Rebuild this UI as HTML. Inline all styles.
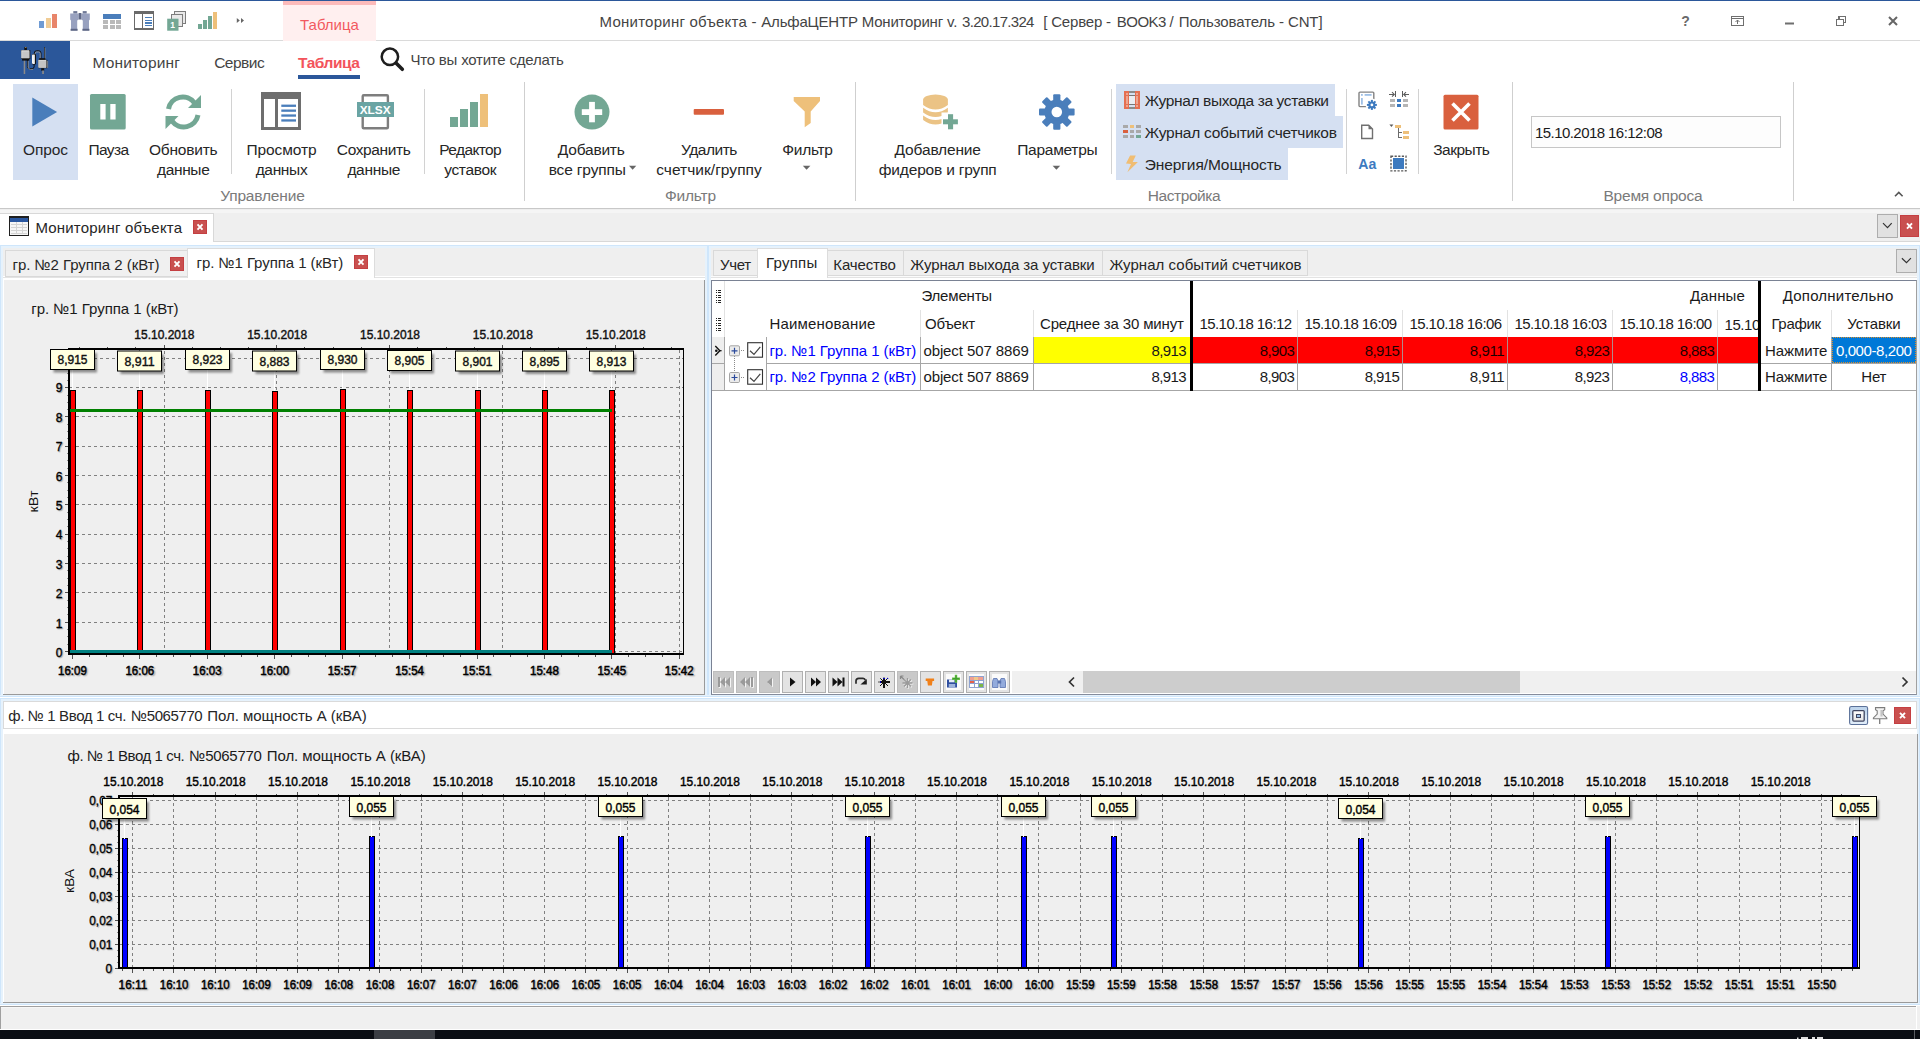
<!DOCTYPE html>
<html lang="ru"><head><meta charset="utf-8"><title>Мониторинг объекта</title>
<style>
html,body{margin:0;padding:0;}
html{overflow:hidden;width:1920px;height:1039px;}
body{width:1920px;height:1039px;overflow:hidden;background:#f0f0f0;position:relative;font-family:"Liberation Sans", sans-serif;}
.a{position:absolute;}
.t{position:absolute;white-space:nowrap;font-family:"Liberation Sans", sans-serif;}
svg{position:absolute;overflow:visible;}
svg text{font-family:"Liberation Sans", sans-serif;}
</style></head>
<body>
<div class="a" style="left:0px;top:0px;width:1920px;height:41px;background:#ffffff;"></div>
<div class="a" style="left:0px;top:0px;width:1920px;height:1px;background:#2b579a;"></div>
<div class="a" style="left:0px;top:40px;width:1920px;height:1px;background:#dadada;"></div>
<div class="a" style="left:283px;top:1px;width:93px;height:40px;background:#ffefef;"></div>
<div class="a" style="left:283px;top:1px;width:93px;height:4px;background:#fcbaba;"></div>
<span class="t" style="left:300.00px;letter-spacing:0.025px;top:17.30px;font-size:15px;line-height:15px;color:#f25a5f;">Таблица</span>
<span class="t" style="left:599.60px;letter-spacing:0.232px;top:13.60px;font-size:15px;line-height:15px;color:#444444;">Мониторинг объекта -</span>
<span class="t" style="left:761.30px;letter-spacing:-0.193px;top:13.60px;font-size:15px;line-height:15px;color:#444444;">АльфаЦЕНТР Мониторинг v.</span>
<span class="t" style="left:962.10px;letter-spacing:-0.691px;top:13.60px;font-size:15px;line-height:15px;color:#444444;">3.20.17.324</span>
<span class="t" style="left:1043.30px;letter-spacing:-0.200px;top:13.60px;font-size:15px;line-height:15px;color:#444444;">[ Сервер -</span>
<span class="t" style="left:1116.70px;letter-spacing:-0.490px;top:13.60px;font-size:15px;line-height:15px;color:#444444;">BOOK3 /</span>
<span class="t" style="left:1178.75px;letter-spacing:-0.101px;top:13.60px;font-size:15px;line-height:15px;color:#444444;">Пользователь - CNT]</span>
<svg style="left:0;top:0" width="400" height="41" viewBox="0 0 400 41">
<g shape-rendering="crispEdges">
<rect x="39" y="21" width="5" height="7" fill="#6f9bd4"/><rect x="45.500" y="17.500" width="5" height="10.500" fill="#f0cc95"/><rect x="52" y="14" width="5" height="14" fill="#e8856a"/>
<rect x="198" y="24" width="3.700" height="4.500" fill="#73a794"/><rect x="203.300" y="20" width="3.700" height="8.500" fill="#73a794"/><rect x="208.300" y="16" width="3.700" height="12.500" fill="#73a794"/><rect x="213.200" y="12" width="3.800" height="16.500" fill="#eec07a"/>
<rect x="103" y="13.500" width="18" height="5" fill="#4a7ebb"/>
<g fill="#b9b9b9"><rect x="103" y="20" width="5" height="3.500"/><rect x="109.500" y="20" width="5" height="3.500"/><rect x="116" y="20" width="5" height="3.500"/><rect x="103" y="25" width="5" height="3.500"/><rect x="109.500" y="25" width="5" height="3.500"/><rect x="116" y="25" width="5" height="3.500"/></g>
<rect x="134.700" y="11.700" width="18.600" height="17.400" fill="#fff" stroke="#6a6a6a" stroke-width="1.400"/><rect x="134" y="11" width="20" height="3.300" fill="#6a6a6a"/><rect x="141.600" y="14" width="1.400" height="15" fill="#6a6a6a"/>
<g fill="#4a7ebb"><rect x="144.500" y="17.200" width="7.500" height="1.200"/><rect x="144.500" y="19.800" width="7.500" height="1.200"/><rect x="144.500" y="22.400" width="7.500" height="1.200"/><rect x="144.500" y="25" width="7.500" height="1.200"/></g>
</g>
<g>
<rect x="73.300" y="11.100" width="4" height="2.500" fill="#6e7896"/><rect x="82.700" y="11.100" width="4" height="2.500" fill="#6e7896"/>
<path d="M70.200 13.500 h8.500 v6 l-1.500 1 v9 h-6.200 v-9 l-.8 -1 z M81.300 13.500 h8.500 v6 l-.8 1 v9 h-6.200 v-9 l-1.500 -1 z" fill="#98a1bf"/>
<rect x="78.700" y="13" width="2.600" height="6.500" fill="#5f6886"/>
<rect x="70.600" y="28.800" width="7" height="2" fill="#5d6685"/><rect x="82.400" y="28.800" width="7" height="2" fill="#5d6685"/>
<rect x="174.500" y="11.500" width="11" height="12" fill="#e9e9e9" stroke="#7d7d7d"/><rect x="171.500" y="14.500" width="11" height="12" fill="#e9e9e9" stroke="#7d7d7d"/><rect x="167.200" y="18.700" width="11.300" height="12" fill="#73a794"/>
<text x="172.500" y="28.300" font-size="8.500" font-weight="bold" fill="#fff" text-anchor="middle">1</text>
<path d="M236.800 18 l3 2.500 l-3 2.500 z M241 18 l3 2.500 l-3 2.500 z" fill="#666"/>
</g></svg>
<svg style="left:1660px;top:0" width="260" height="41" viewBox="1660 0 260 41">
<text x="1685.500" y="26" font-size="14" font-weight="bold" fill="#6a6a6a" text-anchor="middle">?</text>
<g fill="none" stroke="#6f6f6f" stroke-width="1.3" shape-rendering="crispEdges"><rect x="1731.500" y="16.500" width="12" height="9"/><path d="M1731 18.500 h13"/></g>
<path d="M1737.500 24 v-4 M1735.500 22 l2 -2 l2 2" fill="none" stroke="#6f6f6f" stroke-width="1"/>
<rect x="1785" y="22.500" width="9" height="2" fill="#6f6f6f"/>
<g fill="none" stroke="#6f6f6f" stroke-width="1.4" shape-rendering="crispEdges"><rect x="1836.700" y="19.700" width="6.600" height="5.600"/><path d="M1839 19 v-2.300 h6.500 v5.500 h-2"/></g>
<path d="M1889 17 l8 8 M1897 17 l-8 8" stroke="#666" stroke-width="2" fill="none"/>
</svg>
<div class="a" style="left:0px;top:41px;width:1920px;height:167px;background:#ffffff;"></div>
<div class="a" style="left:0px;top:208px;width:1920px;height:1px;background:#c8c8c8;"></div>
<div class="a" style="left:0px;top:41px;width:70px;height:38px;background:#2b579a;"></div>
<svg style="left:0px;top:41px" width="70" height="38" viewBox="0 41 70 38">
<rect x="23.700" y="60" width="1.500" height="14" fill="#8a8a8a"/>
<path d="M27.400 60 v6.500 q0 2.200 2.200 2.200 h2.500 q2 0 2 -2 v-3" fill="none" stroke="#111" stroke-width="1"/>
<path d="M28.200 61 v6 q0 2.400 2.400 2.400 h2.400" fill="none" stroke="#8d8d8d" stroke-width=".9"/>
<path d="M34.300 54.500 v-1.500 q0 -2.200 2.200 -2.200 h2.300 q2.200 0 2.200 2.200 v5.500" fill="none" stroke="#111" stroke-width="1"/>
<path d="M35.200 54.500 v-1 q0 -1.500 1.500 -1.500 h2 q1.500 0 1.500 1.500 v5" fill="none" stroke="#9a9a9a" stroke-width=".9"/>
<rect x="44" y="47" width="1" height="12" fill="#333"/><rect x="44.800" y="48" width=".6" height="11" fill="#888"/>
<rect x="24.300" y="47.200" width="2.600" height="3" fill="#111"/><rect x="25.300" y="47" width="1" height="1" fill="#c9a060"/>
<rect x="21.300" y="50" width="9" height="9" fill="#111"/><rect x="21.300" y="50.300" width="8" height="8" fill="#f2f2f2"/><rect x="22.100" y="51.200" width="7.200" height="7.100" fill="#c6c6c6"/>
<rect x="22.100" y="58.600" width="7.200" height="2" fill="#111"/>
<rect x="32" y="54" width="4" height="10.500" rx="1" fill="#111"/><rect x="32" y="54.600" width="3" height="9.300" rx=".8" fill="#f6f6f6"/><rect x="33.800" y="55" width="1.200" height="8.500" fill="#cfcfcf"/>
<rect x="39.200" y="58.200" width="6.200" height="2" fill="#111"/>
<rect x="38.300" y="59.800" width="9" height="8.400" fill="#111"/><rect x="38.300" y="59.900" width="8" height="7.800" fill="#dedede"/><rect x="39" y="60.600" width="7.200" height="7" fill="#c4c4c4"/>
<rect x="47.300" y="61" width=".8" height="7" fill="#8a8a8a"/>
<rect x="41.200" y="68.200" width="3" height="2.500" fill="#111"/><rect x="42.200" y="70.500" width="1.700" height="3.500" fill="#8a8a8a"/>
</svg>
<span class="t" style="left:92.50px;letter-spacing:0.153px;top:54.88px;font-size:15.5px;line-height:15.5px;color:#444444;">Мониторинг</span>
<span class="t" style="left:214.20px;letter-spacing:-0.513px;top:54.88px;font-size:15.5px;line-height:15.5px;color:#444444;">Сервис</span>
<span class="t" style="left:298.00px;letter-spacing:-0.444px;top:54.88px;font-size:15.5px;line-height:15.5px;color:#f3535b;font-weight:bold;">Таблица</span>
<div class="a" style="left:298px;top:75px;width:62px;height:4px;background:#2b579a;"></div>
<svg style="left:376px;top:44px" width="32" height="32" viewBox="376 44 32 32"><circle cx="389.900" cy="56.800" r="8.200" fill="none" stroke="#1e1e1e" stroke-width="2.500"/><path d="M396 63 l6.300 6.300" stroke="#1e1e1e" stroke-width="3.600" stroke-linecap="round"/></svg>
<span class="t" style="left:410.50px;letter-spacing:-0.214px;top:52.30px;font-size:15px;line-height:15px;color:#444444;">Что вы хотите сделать</span>
<div class="a" style="left:13px;top:84px;width:65px;height:96px;background:#d5e0f2;"></div>
<div class="a" style="left:231px;top:89px;width:1px;height:85px;background:#d2d2d2;"></div>
<div class="a" style="left:424px;top:89px;width:1px;height:85px;background:#d2d2d2;"></div>
<div class="a" style="left:1111px;top:89px;width:1px;height:85px;background:#d2d2d2;"></div>
<div class="a" style="left:1346px;top:89px;width:1px;height:85px;background:#d2d2d2;"></div>
<div class="a" style="left:1418px;top:89px;width:1px;height:85px;background:#d2d2d2;"></div>
<div class="a" style="left:524px;top:82px;width:1px;height:119px;background:#cfcfcf;"></div>
<div class="a" style="left:855px;top:82px;width:1px;height:119px;background:#cfcfcf;"></div>
<div class="a" style="left:1512px;top:82px;width:1px;height:119px;background:#cfcfcf;"></div>
<div class="a" style="left:1793px;top:82px;width:1px;height:119px;background:#cfcfcf;"></div>
<span class="t" style="left:23.00px;letter-spacing:-0.091px;top:142.28px;font-size:15.5px;line-height:15.5px;color:#262626;">Опрос</span>
<span class="t" style="left:88.50px;letter-spacing:-0.616px;top:142.28px;font-size:15.5px;line-height:15.5px;color:#262626;">Пауза</span>
<span class="t" style="left:149.00px;letter-spacing:-0.223px;top:142.28px;font-size:15.5px;line-height:15.5px;color:#262626;">Обновить</span>
<span class="t" style="left:156.95px;letter-spacing:-0.341px;top:161.88px;font-size:15.5px;line-height:15.5px;color:#262626;">данные</span>
<span class="t" style="left:246.60px;letter-spacing:-0.125px;top:142.28px;font-size:15.5px;line-height:15.5px;color:#262626;">Просмотр</span>
<span class="t" style="left:255.65px;letter-spacing:-0.331px;top:161.88px;font-size:15.5px;line-height:15.5px;color:#262626;">данных</span>
<span class="t" style="left:336.85px;letter-spacing:-0.370px;top:142.28px;font-size:15.5px;line-height:15.5px;color:#262626;">Сохранить</span>
<span class="t" style="left:347.40px;letter-spacing:-0.324px;top:161.88px;font-size:15.5px;line-height:15.5px;color:#262626;">данные</span>
<span class="t" style="left:439.35px;letter-spacing:-0.629px;top:142.28px;font-size:15.5px;line-height:15.5px;color:#262626;">Редактор</span>
<span class="t" style="left:444.20px;letter-spacing:-0.335px;top:161.88px;font-size:15.5px;line-height:15.5px;color:#262626;">уставок</span>
<span class="t" style="left:557.80px;letter-spacing:-0.214px;top:142.28px;font-size:15.5px;line-height:15.5px;color:#262626;">Добавить</span>
<span class="t" style="left:548.70px;letter-spacing:-0.142px;top:161.88px;font-size:15.5px;line-height:15.5px;color:#262626;">все группы</span>
<span class="t" style="left:681.00px;letter-spacing:-0.455px;top:142.28px;font-size:15.5px;line-height:15.5px;color:#262626;">Удалить</span>
<span class="t" style="left:656.15px;letter-spacing:0.044px;top:161.88px;font-size:15.5px;line-height:15.5px;color:#262626;">счетчик/группу</span>
<span class="t" style="left:782.30px;letter-spacing:-0.280px;top:142.28px;font-size:15.5px;line-height:15.5px;color:#262626;">Фильтр</span>
<span class="t" style="left:894.60px;letter-spacing:-0.163px;top:142.28px;font-size:15.5px;line-height:15.5px;color:#262626;">Добавление</span>
<span class="t" style="left:878.80px;letter-spacing:-0.178px;top:161.88px;font-size:15.5px;line-height:15.5px;color:#262626;">фидеров и групп</span>
<span class="t" style="left:1017.25px;letter-spacing:-0.281px;top:142.28px;font-size:15.5px;line-height:15.5px;color:#262626;">Параметры</span>
<span class="t" style="left:1433.20px;letter-spacing:-0.500px;top:142.28px;font-size:15.5px;line-height:15.5px;color:#262626;">Закрыть</span>
<span class="t" style="left:220.20px;letter-spacing:-0.177px;top:188.28px;font-size:15.5px;line-height:15.5px;color:#7a7a7a;">Управление</span>
<span class="t" style="left:665.00px;letter-spacing:-0.213px;top:188.28px;font-size:15.5px;line-height:15.5px;color:#7a7a7a;">Фильтр</span>
<span class="t" style="left:1147.70px;letter-spacing:-0.413px;top:188.28px;font-size:15.5px;line-height:15.5px;color:#7a7a7a;">Настройка</span>
<span class="t" style="left:1603.50px;letter-spacing:-0.222px;top:188.28px;font-size:15.5px;line-height:15.5px;color:#7a7a7a;">Время опроса</span>
<svg style="left:0;top:84px" width="1920" height="100" viewBox="0 84 1920 100">
<path d="M32.300 97.400 L57.100 111.900 L32.300 126.400 z" fill="#4a7ebb"/>
<rect x="90" y="94" width="35.700" height="35.500" rx="1.500" fill="#73a794"/><rect x="100.300" y="104" width="5.300" height="15.500" fill="#fff"/><rect x="110.300" y="104" width="5.300" height="15.500" fill="#fff"/>
<g fill="none" stroke="#73a794" stroke-width="5">
<path d="M168.500 109 a14.500 14.500 0 0 1 26 -6"/><path d="M198 115 a14.500 14.500 0 0 1 -26 6"/></g>
<path d="M201 95 v13 h-13 z" fill="#73a794"/><path d="M165.500 129 v-13 h13 z" fill="#73a794"/>
<g shape-rendering="crispEdges">
<rect x="262.500" y="93.500" width="37" height="34.500" fill="#fff" stroke="#6e6e6e" stroke-width="3"/><rect x="261" y="92" width="40" height="7" fill="#6e6e6e"/><rect x="275" y="99" width="3" height="29" fill="#6e6e6e"/>
<g fill="#4a7ebb" shape-rendering="auto"><rect x="281.300" y="104.600" width="14.700" height="2.300"/><rect x="281.300" y="109.500" width="14.700" height="2.300"/><rect x="281.300" y="114.400" width="14.700" height="2.300"/><rect x="281.300" y="119.300" width="14.700" height="2.300"/></g>
<rect x="362.700" y="95.200" width="25.200" height="33" rx="1" fill="#fff" stroke="#7e7e7e" stroke-width="2.400" shape-rendering="auto"/>
<rect x="356.500" y="102" width="37.500" height="14.500" fill="#6aa4a3"/>
<rect x="450" y="117" width="7.500" height="9.500" fill="#73a794"/><rect x="460" y="109" width="7.500" height="17.500" fill="#73a794"/><rect x="470" y="102" width="7.500" height="24.500" fill="#73a794"/><rect x="480" y="94" width="7.500" height="32.500" fill="#eec07a"/>
<rect x="693.700" y="108.900" width="30.300" height="5.800" rx="1" fill="#d9603e" shape-rendering="auto"/>
</g>
<text x="375.200" y="114.300" font-size="11.500" font-weight="bold" fill="#fff" text-anchor="middle" textLength="31" lengthAdjust="spacingAndGlyphs">XLSX</text>
<circle cx="592" cy="112.100" r="17.500" fill="#73a794"/><rect x="589.100" y="101.900" width="5.800" height="20.400" fill="#fff"/><rect x="581.800" y="109.200" width="20.400" height="5.800" fill="#fff"/>
<path d="M793.700 97.100 h26.300 v4 l-9.300 10.500 v11.500 l-6 4.200 v-15.700 l-11 -10.500 z" fill="#eec07a"/>
<g fill="#ebc385"><path d="M923.100 99.600 a12.400 5.200 0 0 1 24.800 0 v5.400 q-12.400 9 -24.800 0 z"/><path d="M923.100 107.800 q12.400 9 24.800 0 v4.800 q-12.400 9 -24.800 0 z"/><path d="M923.100 115.400 q12.400 9 24.800 0 v4.600 q-12.400 9 -24.800 0 z"/></g>
<rect x="941.500" y="112.500" width="17" height="18" fill="#fff"/>
<rect x="948" y="114.200" width="5.100" height="15.100" fill="#73a794"/><rect x="943" y="119.300" width="14.900" height="5" fill="#73a794"/>
<g transform="translate(1056.800 112)" fill="#4a7ebb">
<circle r="12.500"/><rect x="-3.600" y="-17.800" width="7.200" height="9" rx="1" transform="rotate(0)"/><rect x="-3.600" y="-17.800" width="7.200" height="9" rx="1" transform="rotate(45)"/><rect x="-3.600" y="-17.800" width="7.200" height="9" rx="1" transform="rotate(90)"/><rect x="-3.600" y="-17.800" width="7.200" height="9" rx="1" transform="rotate(135)"/><rect x="-3.600" y="-17.800" width="7.200" height="9" rx="1" transform="rotate(180)"/><rect x="-3.600" y="-17.800" width="7.200" height="9" rx="1" transform="rotate(225)"/><rect x="-3.600" y="-17.800" width="7.200" height="9" rx="1" transform="rotate(270)"/><rect x="-3.600" y="-17.800" width="7.200" height="9" rx="1" transform="rotate(315)"/><circle r="5.300" fill="#fff"/></g>
<rect x="1443.500" y="94.700" width="35" height="34.700" rx="1.500" fill="#d9603e"/><path d="M1452.500 103.500 l17 17 M1469.500 103.500 l-17 17" stroke="#fff" stroke-width="3.600"/>
<g fill="#666"><path d="M629 165.800 h7.300 l-3.650 4 z"/><path d="M802.800 165.800 h7.600 l-3.800 4 z"/><path d="M1052.600 165.800 h7.600 l-3.800 4 z"/></g>
</svg>
<div class="a" style="left:1116px;top:84px;width:219px;height:32px;background:#d5e0f2;"></div>
<div class="a" style="left:1116px;top:116px;width:227px;height:32px;background:#d5e0f2;"></div>
<div class="a" style="left:1116px;top:148px;width:172px;height:32px;background:#d5e0f2;"></div>
<span class="t" style="left:1144.80px;letter-spacing:-0.369px;top:93.18px;font-size:15.5px;line-height:15.5px;color:#262626;">Журнал выхода за уставки</span>
<span class="t" style="left:1144.80px;letter-spacing:-0.236px;top:124.88px;font-size:15.5px;line-height:15.5px;color:#262626;">Журнал событий счетчиков</span>
<span class="t" style="left:1144.80px;letter-spacing:-0.108px;top:156.58px;font-size:15.5px;line-height:15.5px;color:#262626;">Энергия/Мощность</span>
<svg style="left:1116px;top:84px" width="310" height="100" viewBox="1116 84 310 100">
<g shape-rendering="crispEdges">
<rect x="1124.300" y="91" width="5" height="18" fill="#e56f52"/><rect x="1134.800" y="91" width="5" height="18" fill="#e56f52"/>
<g fill="#eda592"><rect x="1126" y="93" width="1.700" height="1.700"/><rect x="1126" y="96" width="1.700" height="8"/><rect x="1126" y="105.200" width="1.700" height="1.700"/><rect x="1136.400" y="93" width="1.700" height="1.700"/><rect x="1136.400" y="96" width="1.700" height="8"/><rect x="1136.400" y="105.200" width="1.700" height="1.700"/></g>
<rect x="1129.300" y="91" width="5.500" height="2" fill="#8c8c8c"/><rect x="1129.300" y="107.200" width="5.500" height="1.800" fill="#8c8c8c"/>
<rect x="1129.300" y="94.800" width="5.500" height="1.200" fill="#777"/><rect x="1129.300" y="104.200" width="5.500" height="1.200" fill="#777"/><rect x="1129.300" y="96" width="5.500" height="8.200" fill="#e9ecf3"/>
<g fill="#a9a9a9"><rect x="1123.200" y="124.800" width="4.800" height="3"/><rect x="1136" y="124.800" width="4.800" height="3"/><rect x="1129.500" y="129.800" width="4.800" height="3"/><rect x="1136" y="129.800" width="4.800" height="3"/><rect x="1123.200" y="134.800" width="4.800" height="3.200"/><rect x="1129.500" y="134.800" width="4.800" height="3.200"/></g>
<rect x="1129.500" y="124.800" width="4.800" height="3" fill="#eec07a"/><rect x="1123.200" y="129.800" width="4.800" height="3" fill="#d9603e"/><rect x="1136" y="134.800" width="4.800" height="3.200" fill="#73a794"/>
</g>
<path d="M1130.100 155.400 L1135.800 155.400 L1132.700 161.900 L1137.900 161.900 L1127.400 172.300 L1131 164.100 L1126 163.600 z" fill="#f0bd73"/>
<!-- small icon grid -->
<rect x="1359" y="92.100" width="14.800" height="14.500" rx="1" fill="#fff" stroke="#828282" stroke-width="1.400"/>
<g fill="#9fc0e6"><rect x="1361" y="94" width="1.800" height="1.800"/><rect x="1364.600" y="94" width="7" height="1.800"/><rect x="1361" y="98" width="1.800" height="6.600"/></g>
<circle cx="1371.900" cy="104.900" r="6.300" fill="#fff"/>
<g transform="translate(1371.900 104.900)" fill="#3d7abf"><circle r="3.500"/><rect x="-1" y="-5" width="2" height="3" transform="rotate(0)"/><rect x="-1" y="-5" width="2" height="3" transform="rotate(45)"/><rect x="-1" y="-5" width="2" height="3" transform="rotate(90)"/><rect x="-1" y="-5" width="2" height="3" transform="rotate(135)"/><rect x="-1" y="-5" width="2" height="3" transform="rotate(180)"/><rect x="-1" y="-5" width="2" height="3" transform="rotate(225)"/><rect x="-1" y="-5" width="2" height="3" transform="rotate(270)"/><rect x="-1" y="-5" width="2" height="3" transform="rotate(315)"/><circle r="1.400" fill="#fff"/></g>
<g shape-rendering="crispEdges">
<rect x="1390.300" y="99.100" width="4.900" height="3.300" fill="#b5b5b5"/><rect x="1396.500" y="99.100" width="4.900" height="3.300" fill="#3d7abf"/><rect x="1403" y="99.100" width="4.900" height="3.300" fill="#b5b5b5"/>
<rect x="1390.300" y="104.200" width="4.900" height="3.200" fill="#b5b5b5"/><rect x="1396.500" y="104.200" width="4.900" height="3.200" fill="#3d7abf"/><rect x="1403" y="104.200" width="4.900" height="3.200" fill="#b5b5b5"/>
<rect x="1395.200" y="91.300" width="1.200" height="5.800" fill="#5c5c5c"/><rect x="1401.600" y="91.300" width="1.200" height="5.800" fill="#5c5c5c"/>
<rect x="1389" y="93.800" width="5" height="1.200" fill="#5c5c5c"/><rect x="1404" y="93.800" width="5" height="1.200" fill="#5c5c5c"/>
<rect x="1397.700" y="127.600" width="1.300" height="10.400" fill="#6b6b6b"/><rect x="1397.700" y="132" width="4.500" height="1.300" fill="#6b6b6b"/><rect x="1397.700" y="136.800" width="4.500" height="1.300" fill="#6b6b6b"/>
<rect x="1395.200" y="124.500" width="6.200" height="3.100" fill="#eec07a"/><rect x="1403" y="131" width="6" height="3.300" fill="#eec07a"/><rect x="1403" y="136" width="6" height="3.300" fill="#eec07a"/>
<rect x="1393" y="157.900" width="11" height="11" fill="#3d7abf"/>
</g>
<path d="M1392 92.200 l2.300 2.200 l-2.300 2.200 M1406 92.200 l-2.300 2.200 l2.300 2.200" fill="none" stroke="#5c5c5c" stroke-width="1.100"/>
<path d="M1361.700 125.200 h7 l3.800 3.800 v9.500 h-10.800 z" fill="#fff" stroke="#707070" stroke-width="1.400"/><path d="M1368.500 125 l4.200 4.200 h-4.200 z" fill="#707070"/>
<path d="M1389.400 124.500 h4 l-2 2.400 z" fill="#5a5a5a"/>
<rect x="1391" y="156.200" width="15" height="14.700" fill="none" stroke="#5a5a5a" stroke-width="1.400" stroke-dasharray="2.200 1.400"/>
<text x="1367.300" y="169.300" font-size="14.500" font-weight="bold" fill="#3d7abf" text-anchor="middle" textLength="18" lengthAdjust="spacingAndGlyphs">Aa</text>
</svg>
<div class="a" style="left:1531px;top:116px;width:250px;height:32px;background:#fdfdfd;border:1px solid #c6c6c6;box-sizing:border-box;"></div>
<span class="t" style="left:1535.00px;letter-spacing:-0.560px;top:125.10px;font-size:15px;line-height:15px;color:#1a1a1a;">15.10.2018 16:12:08</span>
<svg style="left:1890px;top:188px" width="18" height="12" viewBox="0 0 18 12"><path d="M5 8.200 l3.800 -3.800 l3.800 3.800" fill="none" stroke="#555" stroke-width="1.600"/></svg>
<div class="a" style="left:0px;top:209px;width:1920px;height:34px;background:#efefef;"></div>
<div class="a" style="left:0px;top:209px;width:1920px;height:1px;background:#eeeeee;"></div>
<div class="a" style="left:0px;top:210px;width:1920px;height:3px;background:#f5f5f5;"></div>
<div class="a" style="left:0px;top:241px;width:1920px;height:1px;background:#d8d8d8;"></div>
<div class="a" style="left:0px;top:213px;width:214px;height:30px;background:#ffffff;border:1px solid #d8d8d8;box-sizing:border-box;border-bottom:none;border-left:none;"></div>
<svg style="left:8px;top:216px" width="22" height="21" viewBox="0 0 22 21" shape-rendering="crispEdges">
<rect x="1.500" y="1" width="19" height="18.300" fill="#f6f6f6" stroke="#1f1f1f" stroke-width="1.400"/><rect x="2" y="1.500" width="18" height="4" fill="#2a57a0"/>
<g fill="#d4d4d4"><rect x="3" y="8" width="16" height="1"/><rect x="3" y="11" width="16" height="1"/><rect x="3" y="14" width="16" height="1"/><rect x="3" y="17" width="16" height="1"/><rect x="8" y="6" width="1" height="12"/><rect x="14" y="6" width="1" height="12"/></g></svg>
<span class="t" style="left:35.40px;letter-spacing:0.200px;top:220.00px;font-size:15px;line-height:15px;color:#262626;">Мониторинг объекта</span>
<svg style="left:193px;top:220px" width="14" height="14" viewBox="0 0 14 14"><rect x=".5" y=".5" width="13" height="13" fill="#c9504f" stroke="#c43f42"/><path d="M4.5 4.4 L9.5 9.6 M9.5 4.4 L4.5 9.6" stroke="#fff" stroke-width="1.900"/></svg>
<div class="a" style="left:1877px;top:214px;width:21px;height:24px;background:#e1e1e1;border:1px solid #adadad;box-sizing:border-box;"></div>
<svg style="left:1877px;top:214px" width="21" height="24" viewBox="1877 214 21 24"><path d="M1883 223.100 L1887.500 227.600 L1891.700 223.100" fill="none" stroke="#333" stroke-width="1.200"/></svg>
<svg style="left:1900px;top:215px" width="19" height="22" viewBox="0 0 19 22"><rect x=".5" y=".5" width="18" height="21" fill="#c9504f" stroke="#c43f42"/><path d="M7.0 8.4 L12.0 13.6 M12.0 8.4 L7.0 13.6" stroke="#fff" stroke-width="1.900"/></svg>
<div class="a" style="left:0px;top:242px;width:1920px;height:458px;background:#ffffff;"></div>
<div class="a" style="left:0px;top:245px;width:1920px;height:1px;background:#cfe6fb;"></div>
<div class="a" style="left:0px;top:246px;width:1920px;height:2px;background:#e6f2fc;"></div>
<div class="a" style="left:0px;top:245px;width:1px;height:452px;background:#cfe6fb;"></div>
<div class="a" style="left:1px;top:246px;width:2px;height:450px;background:#e6f2fc;"></div>
<div class="a" style="left:1917px;top:246px;width:2px;height:450px;background:#e6f2fc;"></div>
<div class="a" style="left:1919px;top:245px;width:1px;height:452px;background:#cfe6fb;"></div>
<div class="a" style="left:705px;top:247px;width:6px;height:449px;background:#e6f2fc;"></div>
<div class="a" style="left:707px;top:246px;width:2px;height:450px;background:#cfe6fb;"></div>
<div class="a" style="left:0px;top:695px;width:1920px;height:1px;background:#e6f2fc;"></div>
<div class="a" style="left:0px;top:696px;width:1920px;height:1px;background:#cfe6fb;"></div>
<div class="a" style="left:3px;top:248px;width:702px;height:28px;background:#efefef;"></div>
<div class="a" style="left:3px;top:277px;width:702px;height:1px;background:#e3e3e3;"></div>
<div class="a" style="left:5px;top:250px;width:183px;height:27px;background:#f0f0f0;border:1px solid #d9d9d9;box-sizing:border-box;"></div>
<div class="a" style="left:187px;top:248px;width:188px;height:30px;background:#ffffff;border:1px solid #dcdcdc;box-sizing:border-box;border-bottom:none;"></div>
<div class="a" style="left:3px;top:278px;width:702px;height:2px;background:#ffffff;"></div>
<div class="a" style="left:188px;top:276px;width:186px;height:2px;background:#ffffff;"></div>
<span class="t" style="left:12.50px;letter-spacing:-0.048px;top:257.30px;font-size:15px;line-height:15px;color:#262626;">гр. №2 Группа 2 (кВт)</span>
<span class="t" style="left:196.50px;letter-spacing:-0.053px;top:255.20px;font-size:15px;line-height:15px;color:#262626;">гр. №1 Группа 1 (кВт)</span>
<svg style="left:170px;top:257px" width="14" height="14" viewBox="0 0 14 14"><rect x=".5" y=".5" width="13" height="13" fill="#c9504f" stroke="#c43f42"/><path d="M4.5 4.4 L9.5 9.6 M9.5 4.4 L4.5 9.6" stroke="#fff" stroke-width="1.900"/></svg>
<svg style="left:354px;top:255px" width="14" height="14" viewBox="0 0 14 14"><rect x=".5" y=".5" width="13" height="13" fill="#c9504f" stroke="#c43f42"/><path d="M4.5 4.4 L9.5 9.6 M9.5 4.4 L4.5 9.6" stroke="#fff" stroke-width="1.900"/></svg>
<div class="a" style="left:4px;top:280px;width:701px;height:415px;background:#efefef;border:1px solid #9a9a9a;box-sizing:border-box;border-left:none;border-top:none;"></div>
<div class="a" style="left:3px;top:694px;width:2px;height:1px;background:#9a9a9a;"></div>
<svg style="left:0;top:0" width="720" height="700" viewBox="0 0 720 700">
<g shape-rendering="crispEdges">
<path d="M70 622.5 H683" stroke="#808080" stroke-width="1" stroke-dasharray="3 3"/>
<path d="M70 592.5 H683" stroke="#808080" stroke-width="1" stroke-dasharray="3 3"/>
<path d="M70 563.5 H683" stroke="#808080" stroke-width="1" stroke-dasharray="3 3"/>
<path d="M70 534.5 H683" stroke="#808080" stroke-width="1" stroke-dasharray="3 3"/>
<path d="M70 504.5 H683" stroke="#808080" stroke-width="1" stroke-dasharray="3 3"/>
<path d="M70 475.5 H683" stroke="#808080" stroke-width="1" stroke-dasharray="3 3"/>
<path d="M70 446.5 H683" stroke="#808080" stroke-width="1" stroke-dasharray="3 3"/>
<path d="M70 416.5 H683" stroke="#808080" stroke-width="1" stroke-dasharray="3 3"/>
<path d="M70 387.5 H683" stroke="#808080" stroke-width="1" stroke-dasharray="3 3"/>
<path d="M70 358.5 H683" stroke="#808080" stroke-width="1" stroke-dasharray="3 3"/>
<path d="M164.5 345 V653" stroke="#808080" stroke-width="1" stroke-dasharray="3 3"/>
<path d="M276.5 345 V653" stroke="#808080" stroke-width="1" stroke-dasharray="3 3"/>
<path d="M389.5 345 V653" stroke="#808080" stroke-width="1" stroke-dasharray="3 3"/>
<path d="M502.5 345 V653" stroke="#808080" stroke-width="1" stroke-dasharray="3 3"/>
<path d="M615.5 345 V653" stroke="#808080" stroke-width="1" stroke-dasharray="3 3"/>
<path d="M72.5 350 V653" stroke="#808080" stroke-width="1" stroke-dasharray="3 3"/>
<path d="M139.5 350 V653" stroke="#808080" stroke-width="1" stroke-dasharray="3 3"/>
<path d="M207.5 350 V653" stroke="#808080" stroke-width="1" stroke-dasharray="3 3"/>
<path d="M274.5 350 V653" stroke="#808080" stroke-width="1" stroke-dasharray="3 3"/>
<path d="M342.5 350 V653" stroke="#808080" stroke-width="1" stroke-dasharray="3 3"/>
<path d="M409.5 350 V653" stroke="#808080" stroke-width="1" stroke-dasharray="3 3"/>
<path d="M477.5 350 V653" stroke="#808080" stroke-width="1" stroke-dasharray="3 3"/>
<path d="M544.5 350 V653" stroke="#808080" stroke-width="1" stroke-dasharray="3 3"/>
<path d="M611.5 350 V653" stroke="#808080" stroke-width="1" stroke-dasharray="3 3"/>
<path d="M679.5 350 V653" stroke="#808080" stroke-width="1" stroke-dasharray="3 3"/>
<path d="M613 651.500 H683" stroke="#808080" stroke-width="1" stroke-dasharray="3 3"/>
<rect x="70" y="348" width="614" height="2" fill="#000"/>
<rect x="68" y="348" width="2" height="307" fill="#000"/>
<rect x="683" y="348" width="1" height="307" fill="#000"/>
<rect x="68" y="653" width="616" height="2" fill="#000"/>
<rect x="79" y="347" width="1" height="1" fill="#505050"/>
<rect x="107" y="347" width="1" height="1" fill="#505050"/>
<rect x="135" y="347" width="1" height="1" fill="#505050"/>
<rect x="164" y="345" width="1" height="3" fill="#505050"/>
<rect x="192" y="347" width="1" height="1" fill="#505050"/>
<rect x="220" y="347" width="1" height="1" fill="#505050"/>
<rect x="248" y="347" width="1" height="1" fill="#505050"/>
<rect x="276" y="345" width="1" height="3" fill="#505050"/>
<rect x="304" y="347" width="1" height="1" fill="#505050"/>
<rect x="333" y="347" width="1" height="1" fill="#505050"/>
<rect x="361" y="347" width="1" height="1" fill="#505050"/>
<rect x="389" y="345" width="1" height="3" fill="#505050"/>
<rect x="417" y="347" width="1" height="1" fill="#505050"/>
<rect x="446" y="347" width="1" height="1" fill="#505050"/>
<rect x="474" y="347" width="1" height="1" fill="#505050"/>
<rect x="502" y="345" width="1" height="3" fill="#505050"/>
<rect x="530" y="347" width="1" height="1" fill="#505050"/>
<rect x="558" y="347" width="1" height="1" fill="#505050"/>
<rect x="586" y="347" width="1" height="1" fill="#505050"/>
<rect x="615" y="345" width="1" height="3" fill="#505050"/>
<rect x="643" y="347" width="1" height="1" fill="#505050"/>
<rect x="671" y="347" width="1" height="1" fill="#505050"/>
<rect x="72" y="655" width="1" height="4" fill="#505050"/>
<rect x="89" y="655" width="1" height="2" fill="#505050"/>
<rect x="106" y="655" width="1" height="2" fill="#505050"/>
<rect x="123" y="655" width="1" height="2" fill="#505050"/>
<rect x="139" y="655" width="1" height="4" fill="#505050"/>
<rect x="156" y="655" width="1" height="2" fill="#505050"/>
<rect x="173" y="655" width="1" height="2" fill="#505050"/>
<rect x="190" y="655" width="1" height="2" fill="#505050"/>
<rect x="207" y="655" width="1" height="4" fill="#505050"/>
<rect x="224" y="655" width="1" height="2" fill="#505050"/>
<rect x="241" y="655" width="1" height="2" fill="#505050"/>
<rect x="257" y="655" width="1" height="2" fill="#505050"/>
<rect x="274" y="655" width="1" height="4" fill="#505050"/>
<rect x="291" y="655" width="1" height="2" fill="#505050"/>
<rect x="308" y="655" width="1" height="2" fill="#505050"/>
<rect x="325" y="655" width="1" height="2" fill="#505050"/>
<rect x="342" y="655" width="1" height="4" fill="#505050"/>
<rect x="359" y="655" width="1" height="2" fill="#505050"/>
<rect x="375" y="655" width="1" height="2" fill="#505050"/>
<rect x="392" y="655" width="1" height="2" fill="#505050"/>
<rect x="409" y="655" width="1" height="4" fill="#505050"/>
<rect x="426" y="655" width="1" height="2" fill="#505050"/>
<rect x="443" y="655" width="1" height="2" fill="#505050"/>
<rect x="460" y="655" width="1" height="2" fill="#505050"/>
<rect x="477" y="655" width="1" height="4" fill="#505050"/>
<rect x="493" y="655" width="1" height="2" fill="#505050"/>
<rect x="510" y="655" width="1" height="2" fill="#505050"/>
<rect x="527" y="655" width="1" height="2" fill="#505050"/>
<rect x="544" y="655" width="1" height="4" fill="#505050"/>
<rect x="561" y="655" width="1" height="2" fill="#505050"/>
<rect x="578" y="655" width="1" height="2" fill="#505050"/>
<rect x="595" y="655" width="1" height="2" fill="#505050"/>
<rect x="611" y="655" width="1" height="4" fill="#505050"/>
<rect x="628" y="655" width="1" height="2" fill="#505050"/>
<rect x="645" y="655" width="1" height="2" fill="#505050"/>
<rect x="662" y="655" width="1" height="2" fill="#505050"/>
<rect x="679" y="655" width="1" height="4" fill="#505050"/>
<rect x="65" y="651" width="3" height="1" fill="#505050"/>
<rect x="67" y="644" width="1" height="1" fill="#8c8c8c"/>
<rect x="67" y="636" width="1" height="1" fill="#8c8c8c"/>
<rect x="67" y="629" width="1" height="1" fill="#8c8c8c"/>
<rect x="65" y="622" width="3" height="1" fill="#505050"/>
<rect x="67" y="614" width="1" height="1" fill="#8c8c8c"/>
<rect x="67" y="607" width="1" height="1" fill="#8c8c8c"/>
<rect x="67" y="600" width="1" height="1" fill="#8c8c8c"/>
<rect x="65" y="592" width="3" height="1" fill="#505050"/>
<rect x="67" y="585" width="1" height="1" fill="#8c8c8c"/>
<rect x="67" y="578" width="1" height="1" fill="#8c8c8c"/>
<rect x="67" y="570" width="1" height="1" fill="#8c8c8c"/>
<rect x="65" y="563" width="3" height="1" fill="#505050"/>
<rect x="67" y="556" width="1" height="1" fill="#8c8c8c"/>
<rect x="67" y="548" width="1" height="1" fill="#8c8c8c"/>
<rect x="67" y="541" width="1" height="1" fill="#8c8c8c"/>
<rect x="65" y="534" width="3" height="1" fill="#505050"/>
<rect x="67" y="526" width="1" height="1" fill="#8c8c8c"/>
<rect x="67" y="519" width="1" height="1" fill="#8c8c8c"/>
<rect x="67" y="512" width="1" height="1" fill="#8c8c8c"/>
<rect x="65" y="504" width="3" height="1" fill="#505050"/>
<rect x="67" y="497" width="1" height="1" fill="#8c8c8c"/>
<rect x="67" y="490" width="1" height="1" fill="#8c8c8c"/>
<rect x="67" y="482" width="1" height="1" fill="#8c8c8c"/>
<rect x="65" y="475" width="3" height="1" fill="#505050"/>
<rect x="67" y="468" width="1" height="1" fill="#8c8c8c"/>
<rect x="67" y="460" width="1" height="1" fill="#8c8c8c"/>
<rect x="67" y="453" width="1" height="1" fill="#8c8c8c"/>
<rect x="65" y="446" width="3" height="1" fill="#505050"/>
<rect x="67" y="438" width="1" height="1" fill="#8c8c8c"/>
<rect x="67" y="431" width="1" height="1" fill="#8c8c8c"/>
<rect x="67" y="424" width="1" height="1" fill="#8c8c8c"/>
<rect x="65" y="416" width="3" height="1" fill="#505050"/>
<rect x="67" y="409" width="1" height="1" fill="#8c8c8c"/>
<rect x="67" y="402" width="1" height="1" fill="#8c8c8c"/>
<rect x="67" y="395" width="1" height="1" fill="#8c8c8c"/>
<rect x="65" y="387" width="3" height="1" fill="#505050"/>
<rect x="67" y="380" width="1" height="1" fill="#8c8c8c"/>
<rect x="67" y="373" width="1" height="1" fill="#8c8c8c"/>
<rect x="67" y="365" width="1" height="1" fill="#8c8c8c"/>
<rect x="65" y="358" width="3" height="1" fill="#505050"/>
<rect x="72" y="370" width="1" height="20" fill="#fff"/>
<rect x="70" y="390" width="6" height="263" fill="#000"/>
<rect x="71" y="391" width="4" height="262" fill="#ff0000"/>
<rect x="139" y="370" width="1" height="20" fill="#fff"/>
<rect x="137" y="390" width="6" height="263" fill="#000"/>
<rect x="138" y="391" width="4" height="262" fill="#ff0000"/>
<rect x="207" y="370" width="1" height="20" fill="#fff"/>
<rect x="205" y="390" width="6" height="263" fill="#000"/>
<rect x="206" y="391" width="4" height="262" fill="#ff0000"/>
<rect x="274" y="370" width="1" height="21" fill="#fff"/>
<rect x="272" y="391" width="6" height="262" fill="#000"/>
<rect x="273" y="392" width="4" height="261" fill="#ff0000"/>
<rect x="342" y="370" width="1" height="19" fill="#fff"/>
<rect x="340" y="389" width="6" height="264" fill="#000"/>
<rect x="341" y="390" width="4" height="263" fill="#ff0000"/>
<rect x="409" y="370" width="1" height="20" fill="#fff"/>
<rect x="407" y="390" width="6" height="263" fill="#000"/>
<rect x="408" y="391" width="4" height="262" fill="#ff0000"/>
<rect x="477" y="370" width="1" height="20" fill="#fff"/>
<rect x="475" y="390" width="6" height="263" fill="#000"/>
<rect x="476" y="391" width="4" height="262" fill="#ff0000"/>
<rect x="544" y="370" width="1" height="20" fill="#fff"/>
<rect x="542" y="390" width="6" height="263" fill="#000"/>
<rect x="543" y="391" width="4" height="262" fill="#ff0000"/>
<rect x="611" y="370" width="1" height="20" fill="#fff"/>
<rect x="609" y="390" width="6" height="263" fill="#000"/>
<rect x="610" y="391" width="4" height="262" fill="#ff0000"/>
<rect x="70" y="409" width="542" height="3" fill="#008000"/>
<rect x="70" y="650" width="542" height="3" fill="#008080"/>
</g>
<rect x="53.5" y="353.0" width="43.500" height="19.500" fill="#000" opacity=".42" filter="url(#bl)"/>
<rect x="50.5" y="349.5" width="44" height="20" fill="#ffffe1" stroke="#000" stroke-width="1"/>
<text x="72.5" y="364.1" font-size="12" fill="#111" stroke="#111" stroke-width=".4" text-anchor="middle" textLength="30" lengthAdjust="spacingAndGlyphs">8,915</text>
<rect x="120.5" y="354.5" width="43.500" height="19.500" fill="#000" opacity=".42" filter="url(#bl)"/>
<rect x="117.5" y="351" width="44" height="20" fill="#ffffe1" stroke="#000" stroke-width="1"/>
<text x="139.5" y="365.6" font-size="12" fill="#111" stroke="#111" stroke-width=".4" text-anchor="middle" textLength="30" lengthAdjust="spacingAndGlyphs">8,911</text>
<rect x="188.5" y="353.0" width="43.500" height="19.500" fill="#000" opacity=".42" filter="url(#bl)"/>
<rect x="185.5" y="349.5" width="44" height="20" fill="#ffffe1" stroke="#000" stroke-width="1"/>
<text x="207.5" y="364.1" font-size="12" fill="#111" stroke="#111" stroke-width=".4" text-anchor="middle" textLength="30" lengthAdjust="spacingAndGlyphs">8,923</text>
<rect x="255.5" y="354.5" width="43.500" height="19.500" fill="#000" opacity=".42" filter="url(#bl)"/>
<rect x="252.5" y="351" width="44" height="20" fill="#ffffe1" stroke="#000" stroke-width="1"/>
<text x="274.5" y="365.6" font-size="12" fill="#111" stroke="#111" stroke-width=".4" text-anchor="middle" textLength="30" lengthAdjust="spacingAndGlyphs">8,883</text>
<rect x="323.5" y="353.0" width="43.500" height="19.500" fill="#000" opacity=".42" filter="url(#bl)"/>
<rect x="320.5" y="349.5" width="44" height="20" fill="#ffffe1" stroke="#000" stroke-width="1"/>
<text x="342.5" y="364.1" font-size="12" fill="#111" stroke="#111" stroke-width=".4" text-anchor="middle" textLength="30" lengthAdjust="spacingAndGlyphs">8,930</text>
<rect x="390.5" y="354.0" width="43.500" height="19.500" fill="#000" opacity=".42" filter="url(#bl)"/>
<rect x="387.5" y="350.5" width="44" height="20" fill="#ffffe1" stroke="#000" stroke-width="1"/>
<text x="409.5" y="365.1" font-size="12" fill="#111" stroke="#111" stroke-width=".4" text-anchor="middle" textLength="30" lengthAdjust="spacingAndGlyphs">8,905</text>
<rect x="458.5" y="354.5" width="43.500" height="19.500" fill="#000" opacity=".42" filter="url(#bl)"/>
<rect x="455.5" y="351" width="44" height="20" fill="#ffffe1" stroke="#000" stroke-width="1"/>
<text x="477.5" y="365.6" font-size="12" fill="#111" stroke="#111" stroke-width=".4" text-anchor="middle" textLength="30" lengthAdjust="spacingAndGlyphs">8,901</text>
<rect x="525.5" y="354.5" width="43.500" height="19.500" fill="#000" opacity=".42" filter="url(#bl)"/>
<rect x="522.5" y="351" width="44" height="20" fill="#ffffe1" stroke="#000" stroke-width="1"/>
<text x="544.5" y="365.6" font-size="12" fill="#111" stroke="#111" stroke-width=".4" text-anchor="middle" textLength="30" lengthAdjust="spacingAndGlyphs">8,895</text>
<rect x="592.5" y="354.5" width="43.500" height="19.500" fill="#000" opacity=".42" filter="url(#bl)"/>
<rect x="589.5" y="351" width="44" height="20" fill="#ffffe1" stroke="#000" stroke-width="1"/>
<text x="611.5" y="365.6" font-size="12" fill="#111" stroke="#111" stroke-width=".4" text-anchor="middle" textLength="30" lengthAdjust="spacingAndGlyphs">8,913</text>
<text x="164.3" y="338.7" font-size="12" fill="#111" stroke="#111" stroke-width=".4" text-anchor="middle" textLength="60" lengthAdjust="spacingAndGlyphs">15.10.2018</text>
<text x="277.15" y="338.7" font-size="12" fill="#111" stroke="#111" stroke-width=".4" text-anchor="middle" textLength="60" lengthAdjust="spacingAndGlyphs">15.10.2018</text>
<text x="390.0" y="338.7" font-size="12" fill="#111" stroke="#111" stroke-width=".4" text-anchor="middle" textLength="60" lengthAdjust="spacingAndGlyphs">15.10.2018</text>
<text x="502.84999999999997" y="338.7" font-size="12" fill="#111" stroke="#111" stroke-width=".4" text-anchor="middle" textLength="60" lengthAdjust="spacingAndGlyphs">15.10.2018</text>
<text x="615.7" y="338.7" font-size="12" fill="#111" stroke="#111" stroke-width=".4" text-anchor="middle" textLength="60" lengthAdjust="spacingAndGlyphs">15.10.2018</text>
<text x="72.4" y="675.2" font-size="12.400" fill="#000" stroke="#000" stroke-width=".5" text-anchor="middle" textLength="28.800" lengthAdjust="spacingAndGlyphs" style="text-shadow:1.5px 1px 1.5px rgba(0,0,0,.22)">16:09</text>
<text x="139.83" y="675.2" font-size="12.400" fill="#000" stroke="#000" stroke-width=".5" text-anchor="middle" textLength="28.800" lengthAdjust="spacingAndGlyphs" style="text-shadow:1.5px 1px 1.5px rgba(0,0,0,.22)">16:06</text>
<text x="207.26000000000002" y="675.2" font-size="12.400" fill="#000" stroke="#000" stroke-width=".5" text-anchor="middle" textLength="28.800" lengthAdjust="spacingAndGlyphs" style="text-shadow:1.5px 1px 1.5px rgba(0,0,0,.22)">16:03</text>
<text x="274.69000000000005" y="675.2" font-size="12.400" fill="#000" stroke="#000" stroke-width=".5" text-anchor="middle" textLength="28.800" lengthAdjust="spacingAndGlyphs" style="text-shadow:1.5px 1px 1.5px rgba(0,0,0,.22)">16:00</text>
<text x="342.12" y="675.2" font-size="12.400" fill="#000" stroke="#000" stroke-width=".5" text-anchor="middle" textLength="28.800" lengthAdjust="spacingAndGlyphs" style="text-shadow:1.5px 1px 1.5px rgba(0,0,0,.22)">15:57</text>
<text x="409.55000000000007" y="675.2" font-size="12.400" fill="#000" stroke="#000" stroke-width=".5" text-anchor="middle" textLength="28.800" lengthAdjust="spacingAndGlyphs" style="text-shadow:1.5px 1px 1.5px rgba(0,0,0,.22)">15:54</text>
<text x="476.98" y="675.2" font-size="12.400" fill="#000" stroke="#000" stroke-width=".5" text-anchor="middle" textLength="28.800" lengthAdjust="spacingAndGlyphs" style="text-shadow:1.5px 1px 1.5px rgba(0,0,0,.22)">15:51</text>
<text x="544.4100000000001" y="675.2" font-size="12.400" fill="#000" stroke="#000" stroke-width=".5" text-anchor="middle" textLength="28.800" lengthAdjust="spacingAndGlyphs" style="text-shadow:1.5px 1px 1.5px rgba(0,0,0,.22)">15:48</text>
<text x="611.84" y="675.2" font-size="12.400" fill="#000" stroke="#000" stroke-width=".5" text-anchor="middle" textLength="28.800" lengthAdjust="spacingAndGlyphs" style="text-shadow:1.5px 1px 1.5px rgba(0,0,0,.22)">15:45</text>
<text x="679.2700000000001" y="675.2" font-size="12.400" fill="#000" stroke="#000" stroke-width=".5" text-anchor="middle" textLength="28.800" lengthAdjust="spacingAndGlyphs" style="text-shadow:1.5px 1px 1.5px rgba(0,0,0,.22)">15:42</text>
<text x="62.5" y="657.0" font-size="12" fill="#000" stroke="#000" stroke-width=".33" text-anchor="end" style="text-shadow:1px 1px 1px rgba(0,0,0,.25)">0</text>
<text x="62.5" y="627.6" font-size="12" fill="#000" stroke="#000" stroke-width=".33" text-anchor="end" style="text-shadow:1px 1px 1px rgba(0,0,0,.25)">1</text>
<text x="62.5" y="598.2" font-size="12" fill="#000" stroke="#000" stroke-width=".33" text-anchor="end" style="text-shadow:1px 1px 1px rgba(0,0,0,.25)">2</text>
<text x="62.5" y="568.8" font-size="12" fill="#000" stroke="#000" stroke-width=".33" text-anchor="end" style="text-shadow:1px 1px 1px rgba(0,0,0,.25)">3</text>
<text x="62.5" y="539.4" font-size="12" fill="#000" stroke="#000" stroke-width=".33" text-anchor="end" style="text-shadow:1px 1px 1px rgba(0,0,0,.25)">4</text>
<text x="62.5" y="510.0" font-size="12" fill="#000" stroke="#000" stroke-width=".33" text-anchor="end" style="text-shadow:1px 1px 1px rgba(0,0,0,.25)">5</text>
<text x="62.5" y="480.6" font-size="12" fill="#000" stroke="#000" stroke-width=".33" text-anchor="end" style="text-shadow:1px 1px 1px rgba(0,0,0,.25)">6</text>
<text x="62.5" y="451.2" font-size="12" fill="#000" stroke="#000" stroke-width=".33" text-anchor="end" style="text-shadow:1px 1px 1px rgba(0,0,0,.25)">7</text>
<text x="62.5" y="421.8" font-size="12" fill="#000" stroke="#000" stroke-width=".33" text-anchor="end" style="text-shadow:1px 1px 1px rgba(0,0,0,.25)">8</text>
<text x="62.5" y="392.4" font-size="12" fill="#000" stroke="#000" stroke-width=".33" text-anchor="end" style="text-shadow:1px 1px 1px rgba(0,0,0,.25)">9</text>
<text transform="translate(37.5 501.5) rotate(-90)" font-size="12" fill="#111" text-anchor="middle" textLength="22" lengthAdjust="spacingAndGlyphs">кВт</text>
<defs><filter id="bl" x="-20%" y="-20%" width="140%" height="140%"><feGaussianBlur stdDeviation="1"/></filter></defs>
</svg>
<span class="t" style="left:31.25px;letter-spacing:-0.031px;top:301.05px;font-size:15px;line-height:15px;color:#1a1a1a;">гр. №1 Группа 1 (кВт)</span>
<div class="a" style="left:711px;top:248px;width:1206px;height:28px;background:#efefef;"></div>
<div class="a" style="left:711px;top:276px;width:1206px;height:1px;background:#fbfbfb;"></div>
<div class="a" style="left:711px;top:277px;width:1206px;height:1px;background:#e3e3e3;"></div>
<div class="a" style="left:711px;top:278px;width:1206px;height:2px;background:#ffffff;"></div>
<div class="a" style="left:713px;top:250px;width:45px;height:26px;background:#efefef;border:1px solid #d9d9d9;box-sizing:border-box;"></div>
<span class="t" style="left:720.00px;letter-spacing:-0.316px;top:256.90px;font-size:15px;line-height:15px;color:#262626;">Учет</span>
<div class="a" style="left:827px;top:250px;width:77px;height:26px;background:#efefef;border:1px solid #d9d9d9;box-sizing:border-box;"></div>
<span class="t" style="left:833.30px;letter-spacing:-0.128px;top:256.90px;font-size:15px;line-height:15px;color:#262626;">Качество</span>
<div class="a" style="left:903px;top:250px;width:200px;height:26px;background:#efefef;border:1px solid #d9d9d9;box-sizing:border-box;"></div>
<span class="t" style="left:910.30px;letter-spacing:-0.089px;top:256.90px;font-size:15px;line-height:15px;color:#262626;">Журнал выхода за уставки</span>
<div class="a" style="left:1102px;top:250px;width:206px;height:26px;background:#efefef;border:1px solid #d9d9d9;box-sizing:border-box;"></div>
<span class="t" style="left:1109.40px;letter-spacing:0.042px;top:256.90px;font-size:15px;line-height:15px;color:#262626;">Журнал событий счетчиков</span>
<div class="a" style="left:757px;top:248px;width:71px;height:30px;background:#ffffff;border:1px solid #dcdcdc;box-sizing:border-box;border-bottom:none;"></div>
<div class="a" style="left:758px;top:276px;width:69px;height:2px;background:#ffffff;"></div>
<span class="t" style="left:766.00px;letter-spacing:0.253px;top:254.80px;font-size:15px;line-height:15px;color:#262626;">Группы</span>
<div class="a" style="left:1896px;top:249px;width:21px;height:24px;background:#e1e1e1;border:1px solid #adadad;box-sizing:border-box;"></div>
<svg style="left:1896px;top:249px" width="21" height="24" viewBox="1896 249 21 24"><path d="M1901.900 258.200 L1906.500 262.700 L1910.900 258.200" fill="none" stroke="#333" stroke-width="1.200"/></svg>
<div class="a" style="left:711px;top:280px;width:1206px;height:415px;background:#ffffff;border:1px solid #7a8294;box-sizing:border-box;border-right:1px solid #a0a0a0;border-bottom:1px solid #858c9c;"></div>
<div class="a" style="left:712px;top:337px;width:12px;height:53px;background:#eeeeee;"></div>
<div class="a" style="left:724px;top:281px;width:1px;height:56px;background:#e2e2e2;"></div>
<div class="a" style="left:724px;top:337px;width:1px;height:54px;background:#a6a6a6;"></div>
<div class="a" style="left:920px;top:310px;width:1px;height:27px;background:#e2e2e2;"></div>
<div class="a" style="left:920px;top:337px;width:1px;height:54px;background:#a6a6a6;"></div>
<div class="a" style="left:1033px;top:310px;width:1px;height:27px;background:#e2e2e2;"></div>
<div class="a" style="left:1033px;top:337px;width:1px;height:54px;background:#a6a6a6;"></div>
<div class="a" style="left:1297px;top:310px;width:1px;height:27px;background:#e2e2e2;"></div>
<div class="a" style="left:1297px;top:337px;width:1px;height:54px;background:#a6a6a6;"></div>
<div class="a" style="left:1402px;top:310px;width:1px;height:27px;background:#e2e2e2;"></div>
<div class="a" style="left:1402px;top:337px;width:1px;height:54px;background:#a6a6a6;"></div>
<div class="a" style="left:1507px;top:310px;width:1px;height:27px;background:#e2e2e2;"></div>
<div class="a" style="left:1507px;top:337px;width:1px;height:54px;background:#a6a6a6;"></div>
<div class="a" style="left:1612px;top:310px;width:1px;height:27px;background:#e2e2e2;"></div>
<div class="a" style="left:1612px;top:337px;width:1px;height:54px;background:#a6a6a6;"></div>
<div class="a" style="left:1717px;top:310px;width:1px;height:27px;background:#e2e2e2;"></div>
<div class="a" style="left:1717px;top:337px;width:1px;height:54px;background:#a6a6a6;"></div>
<div class="a" style="left:1831px;top:310px;width:1px;height:27px;background:#e2e2e2;"></div>
<div class="a" style="left:1831px;top:337px;width:1px;height:54px;background:#a6a6a6;"></div>
<div class="a" style="left:766px;top:337px;width:1px;height:54px;background:#a6a6a6;"></div>
<div class="a" style="left:712px;top:363px;width:1204px;height:1px;background:#a6a6a6;"></div>
<div class="a" style="left:712px;top:390px;width:1204px;height:1px;background:#a6a6a6;"></div>
<div class="a" style="left:725px;top:363px;width:41px;height:1px;background:#ffffff;"></div>
<div class="a" style="left:1034px;top:337px;width:156px;height:26px;background:#ffff00;"></div>
<div class="a" style="left:1193px;top:337px;width:565px;height:26px;background:#ff0000;"></div>
<div class="a" style="left:1297px;top:337px;width:1px;height:26px;background:#b08a8a;"></div>
<div class="a" style="left:1402px;top:337px;width:1px;height:26px;background:#b08a8a;"></div>
<div class="a" style="left:1507px;top:337px;width:1px;height:26px;background:#b08a8a;"></div>
<div class="a" style="left:1612px;top:337px;width:1px;height:26px;background:#b08a8a;"></div>
<div class="a" style="left:1717px;top:337px;width:1px;height:26px;background:#b08a8a;"></div>
<div class="a" style="left:1832px;top:337px;width:84px;height:26px;background:#0078d7;"></div>
<svg style="left:1832px;top:337px" width="84" height="26"><rect x=".5" y=".5" width="83" height="25" fill="none" stroke="#d98e2b" stroke-width="1" stroke-dasharray="1 1" shape-rendering="crispEdges"/></svg>
<div class="a" style="left:1190px;top:281px;width:3px;height:110px;background:#000000;"></div>
<div class="a" style="left:1758px;top:281px;width:3px;height:110px;background:#000000;"></div>
<span class="t" style="left:921.45px;letter-spacing:-0.184px;top:287.80px;font-size:15px;line-height:15px;color:#1a1a1a;">Элементы</span>
<span class="t" style="left:1690.00px;letter-spacing:0.133px;top:287.80px;font-size:15px;line-height:15px;color:#1a1a1a;">Данные</span>
<span class="t" style="left:1782.70px;letter-spacing:0.218px;top:287.80px;font-size:15px;line-height:15px;color:#1a1a1a;">Дополнительно</span>
<span class="t" style="left:769.40px;letter-spacing:0.176px;top:315.90px;font-size:15px;line-height:15px;color:#1a1a1a;">Наименование</span>
<span class="t" style="left:925.00px;letter-spacing:-0.182px;top:315.90px;font-size:15px;line-height:15px;color:#1a1a1a;">Объект</span>
<span class="t" style="left:1040.00px;letter-spacing:-0.156px;top:315.90px;font-size:15px;line-height:15px;color:#1a1a1a;">Среднее за 30 минут</span>
<span class="t" style="left:1199.50px;letter-spacing:-0.578px;top:315.90px;font-size:15px;line-height:15px;color:#1a1a1a;">15.10.18 16:12</span>
<span class="t" style="left:1304.50px;letter-spacing:-0.578px;top:315.90px;font-size:15px;line-height:15px;color:#1a1a1a;">15.10.18 16:09</span>
<span class="t" style="left:1409.50px;letter-spacing:-0.578px;top:315.90px;font-size:15px;line-height:15px;color:#1a1a1a;">15.10.18 16:06</span>
<span class="t" style="left:1514.50px;letter-spacing:-0.578px;top:315.90px;font-size:15px;line-height:15px;color:#1a1a1a;">15.10.18 16:03</span>
<span class="t" style="left:1619.50px;letter-spacing:-0.578px;top:315.90px;font-size:15px;line-height:15px;color:#1a1a1a;">15.10.18 16:00</span>
<div class="a" style="left:1718px;top:311px;width:40px;height:25px;background:#ffffff;"></div>
<div class="a" style="left:1718px;top:311px;width:40px;height:25px;overflow:hidden;"><span class="t" style="left:6.500px;top:6.250px;font-size:15px;line-height:15px;color:#1a1a1a;letter-spacing:-.42px;">15.10.18 15:57</span></div>
<span class="t" style="left:1771.40px;letter-spacing:-0.308px;top:315.90px;font-size:15px;line-height:15px;color:#1a1a1a;">График</span>
<span class="t" style="left:1847.30px;letter-spacing:-0.098px;top:315.90px;font-size:15px;line-height:15px;color:#1a1a1a;">Уставки</span>
<span class="t" style="left:769.40px;letter-spacing:-0.048px;top:342.50px;font-size:15px;line-height:15px;color:#0000ff;">гр. №1 Группа 1 (кВт)</span>
<span class="t" style="left:769.40px;letter-spacing:-0.048px;top:369.20px;font-size:15px;line-height:15px;color:#0000ff;">гр. №2 Группа 2 (кВт)</span>
<span class="t" style="left:923.40px;letter-spacing:-0.098px;top:342.50px;font-size:15px;line-height:15px;color:#1a1a1a;">object 507 8869</span>
<span class="t" style="left:923.40px;letter-spacing:-0.098px;top:369.20px;font-size:15px;line-height:15px;color:#1a1a1a;">object 507 8869</span>
<span class="t" style="left:1151.50px;letter-spacing:-0.609px;top:342.50px;font-size:15px;line-height:15px;color:#1a1a1a;">8,913</span>
<span class="t" style="left:1151.50px;letter-spacing:-0.609px;top:369.20px;font-size:15px;line-height:15px;color:#1a1a1a;">8,913</span>
<span class="t" style="left:1259.70px;letter-spacing:-0.609px;top:342.50px;font-size:15px;line-height:15px;color:#1c0000;">8,903</span>
<span class="t" style="left:1259.70px;letter-spacing:-0.609px;top:369.20px;font-size:15px;line-height:15px;color:#1a1a1a;">8,903</span>
<span class="t" style="left:1364.70px;letter-spacing:-0.609px;top:342.50px;font-size:15px;line-height:15px;color:#1c0000;">8,915</span>
<span class="t" style="left:1364.70px;letter-spacing:-0.609px;top:369.20px;font-size:15px;line-height:15px;color:#1a1a1a;">8,915</span>
<span class="t" style="left:1469.70px;letter-spacing:-0.388px;top:342.50px;font-size:15px;line-height:15px;color:#1c0000;">8,911</span>
<span class="t" style="left:1469.70px;letter-spacing:-0.388px;top:369.20px;font-size:15px;line-height:15px;color:#1a1a1a;">8,911</span>
<span class="t" style="left:1574.70px;letter-spacing:-0.609px;top:342.50px;font-size:15px;line-height:15px;color:#1c0000;">8,923</span>
<span class="t" style="left:1574.70px;letter-spacing:-0.609px;top:369.20px;font-size:15px;line-height:15px;color:#1a1a1a;">8,923</span>
<span class="t" style="left:1679.70px;letter-spacing:-0.609px;top:342.50px;font-size:15px;line-height:15px;color:#1c0000;">8,883</span>
<span class="t" style="left:1679.70px;letter-spacing:-0.609px;top:369.20px;font-size:15px;line-height:15px;color:#0000ff;">8,883</span>
<span class="t" style="left:1765.00px;letter-spacing:-0.093px;top:342.50px;font-size:15px;line-height:15px;color:#1a1a1a;">Нажмите</span>
<span class="t" style="left:1765.00px;letter-spacing:-0.093px;top:369.20px;font-size:15px;line-height:15px;color:#1a1a1a;">Нажмите</span>
<span class="t" style="left:1836.00px;letter-spacing:-0.416px;top:342.50px;font-size:15px;line-height:15px;color:#ffffff;">0,000-8,200</span>
<span class="t" style="left:1861.30px;letter-spacing:-0.182px;top:369.20px;font-size:15px;line-height:15px;color:#1a1a1a;">Нет</span>
<svg style="left:712px;top:281px" width="60" height="112" viewBox="712 281 60 112">
<g fill="#222" shape-rendering="crispEdges"><rect x="716" y="290" width="1" height="1"/><rect x="718" y="290" width="3" height="1"/><rect x="716" y="292" width="1" height="1"/><rect x="718" y="292" width="3" height="1"/><rect x="716" y="295" width="1" height="1"/><rect x="718" y="295" width="3" height="1"/><rect x="716" y="297" width="1" height="1"/><rect x="718" y="297" width="3" height="1"/><rect x="716" y="300" width="1" height="1"/><rect x="718" y="300" width="3" height="1"/><rect x="716" y="302" width="1" height="1"/><rect x="718" y="302" width="3" height="1"/><rect x="716" y="318" width="1" height="1"/><rect x="718" y="318" width="3" height="1"/><rect x="716" y="320" width="1" height="1"/><rect x="718" y="320" width="3" height="1"/><rect x="716" y="323" width="1" height="1"/><rect x="718" y="323" width="3" height="1"/><rect x="716" y="325" width="1" height="1"/><rect x="718" y="325" width="3" height="1"/><rect x="716" y="328" width="1" height="1"/><rect x="718" y="328" width="3" height="1"/><rect x="716" y="330" width="1" height="1"/><rect x="718" y="330" width="3" height="1"/></g>
<path d="M715.300 346 l4.500 4.700 l-4.500 4.700" fill="none" stroke="#111" stroke-width="1.400"/><circle cx="716.300" cy="350.700" r="1.300" fill="#111"/><path d="M719 350.700 h2.600" stroke="#111" stroke-width="1.200"/>
<g shape-rendering="crispEdges">
<path d="M734.500 356 V372" stroke="#8a8a8a" stroke-dasharray="1 1"/><path d="M741 350.500 H745 M741 377.500 H744" stroke="#8a8a8a" stroke-dasharray="1 1"/>
</g>
<rect x="729.500" y="345.800" width="10" height="10" rx="1.200" fill="#ebebeb" stroke="#a4a4a4"/><path d="M731.500 350.800 h6 M734.500 347.800 v6" stroke="#2b4a9c" stroke-width="1.200"/>
<rect x="729.500" y="372.500" width="10" height="10" rx="1.200" fill="#ebebeb" stroke="#a4a4a4"/><path d="M731.500 377.500 h6 M734.500 374.500 v6" stroke="#2b4a9c" stroke-width="1.200"/>
<rect x="747.700" y="342.700" width="14.800" height="14.500" fill="#fff" stroke="#333" stroke-width="1.100"/>
<rect x="747.700" y="369.700" width="14.800" height="14.500" fill="#fff" stroke="#333" stroke-width="1.100"/>
<path d="M750 350.700 l4 3.700 l6.300 -7.600" fill="none" stroke="#444" stroke-width="1.200"/>
<path d="M750 377.700 l4 3.700 l6.300 -7.600" fill="none" stroke="#444" stroke-width="1.200"/>
</svg>
<div class="a" style="left:713px;top:671px;width:21px;height:22px;background:#c9c9c9;border:1px solid #bdbdbd;box-sizing:border-box;"></div>
<div class="a" style="left:736px;top:671px;width:21px;height:22px;background:#c9c9c9;border:1px solid #bdbdbd;box-sizing:border-box;"></div>
<div class="a" style="left:759px;top:671px;width:21px;height:22px;background:#c9c9c9;border:1px solid #bdbdbd;box-sizing:border-box;"></div>
<div class="a" style="left:782px;top:671px;width:21px;height:22px;background:#e3e3e3;border:1px solid #b0b0b0;box-sizing:border-box;"></div>
<div class="a" style="left:805px;top:671px;width:21px;height:22px;background:#e3e3e3;border:1px solid #b0b0b0;box-sizing:border-box;"></div>
<div class="a" style="left:828px;top:671px;width:21px;height:22px;background:#e3e3e3;border:1px solid #b0b0b0;box-sizing:border-box;"></div>
<div class="a" style="left:851px;top:671px;width:21px;height:22px;background:#e3e3e3;border:1px solid #b0b0b0;box-sizing:border-box;"></div>
<div class="a" style="left:874px;top:671px;width:21px;height:22px;background:#e3e3e3;border:1px solid #b0b0b0;box-sizing:border-box;"></div>
<div class="a" style="left:897px;top:671px;width:21px;height:22px;background:#c9c9c9;border:1px solid #bdbdbd;box-sizing:border-box;"></div>
<div class="a" style="left:920px;top:671px;width:21px;height:22px;background:#e3e3e3;border:1px solid #b0b0b0;box-sizing:border-box;"></div>
<div class="a" style="left:943px;top:671px;width:21px;height:22px;background:#e3e3e3;border:1px solid #b0b0b0;box-sizing:border-box;"></div>
<div class="a" style="left:966px;top:671px;width:21px;height:22px;background:#e3e3e3;border:1px solid #b0b0b0;box-sizing:border-box;"></div>
<div class="a" style="left:989px;top:671px;width:21px;height:22px;background:#e3e3e3;border:1px solid #b0b0b0;box-sizing:border-box;"></div>
<div class="a" style="left:946px;top:674px;width:15px;height:16px;background:#fbfbfb;"></div>
<div class="a" style="left:969px;top:674px;width:15px;height:16px;background:#fbfbfb;"></div>
<div class="a" style="left:992px;top:674px;width:15px;height:16px;background:#fbfbfb;"></div>
<div class="a" style="left:1012px;top:671px;width:52px;height:22px;background:#f0f0f0;"></div>
<div class="a" style="left:1063px;top:671px;width:853px;height:22px;background:#f0f0f0;"></div>
<div class="a" style="left:1083px;top:671px;width:437px;height:22px;background:#cdcdcd;"></div>
<svg style="left:712px;top:671px" width="1206" height="22" viewBox="712 671 1206 22">
<g fill="#fff" transform="translate(.8 .8)"><path d="M718 677 h2 v10 h-2 z M725 677 v10 l-5 -5 z M730 677 v10 l-5 -5 z"/><path d="M751 677 h2 v10 h-2z M745 677 v10 l-5 -5 z M750 677 v10 l-5 -5 z" /><path d="M772 677.500 v9 l-5 -4.500 z"/></g>
<g fill="#9a9a9a"><path d="M718 677 h2 v10 h-2 z M725 677 v10 l-5 -5 z M730 677 v10 l-5 -5 z"/><path d="M751 677 h2 v10 h-2z M745 677 v10 l-5 -5 z M750 677 v10 l-5 -5 z" /><path d="M772 677.500 v9 l-5 -4.500 z"/></g>
<g fill="#111"><path d="M790 677.500 v9 l5.500 -4.500 z"/><path d="M811 677.500 v9 l5 -4.500 z M816 677.500 v9 l5 -4.500 z"/><path d="M832.500 677.500 v9 l5 -4.500 z M837.500 677.500 v9 l5 -4.500 z M842.500 677.500 h2 v9 h-2 z"/>
<path d="M856 683.700 V681 Q856 678.600 858.800 678.400 H863 Q864.800 678.600 865.300 680.200" fill="none" stroke="#2a2a2a" stroke-width="1.700"/><path d="M860.400 684.500 H866.800 V678.900 Z" fill="#1e1e1e"/>
<g shape-rendering="crispEdges"><rect x="883" y="678" width="2" height="10"/><rect x="880" y="681" width="10" height="2"/><rect x="883" y="678" width="2" height="1" fill="#0000c0"/><rect x="880" y="681" width="1" height="2" fill="#0000c0"/><rect x="883" y="676.500" width="2" height="1.300" fill="#9a9a9a"/><rect x="878.400" y="681" width="1.500" height="2" fill="#9a9a9a"/></g>
<path d="M880.300 678.300 l7.700 7.700 M887.700 678.300 l-7.700 7.700" stroke="#111" stroke-width="1" fill="none"/><circle cx="887.600" cy="678.400" r=".7" fill="#0000c0"/></g>
<path d="M908.300 678.800 v10 M903.300 683.800 h10 M904.800 680.300 l7 7 M911.800 680.300 l-7 7" stroke="#f2f2f2" stroke-width="1.300" fill="none"/>
<path d="M907.500 678 v10 M902.500 683 h10 M904 679.500 l7 7 M911 679.500 l-7 7" stroke="#9a9a9a" stroke-width="1.300" fill="none"/><path d="M900.500 676 l3.500 3.500 M900.500 676 h3 M900.500 676 v3" stroke="#8a8a8a" stroke-width="1.200" fill="none"/>
<path d="M925.700 678.400 h8.400 v2.700 h-8.400 z M927.300 681.100 h5.200 l-.6 4.400 h-4 z" fill="#f08019"/>
<rect x="947" y="679.500" width="10" height="8" fill="#2f4f9f"/><rect x="949" y="679.500" width="5.500" height="2.800" fill="#e6ecf7"/><rect x="948.800" y="684" width="6.400" height="3.500" fill="#9fb3dc"/><path d="M956 674.700 v8 M952 678.700 h8" stroke="#6cc04a" stroke-width="2.400"/><path d="M956 675.500 v6.400 M952.800 678.700 h6.400" stroke="#3f9e2f" stroke-width="1.200"/>
<g shape-rendering="crispEdges"><rect x="969.500" y="676.500" width="14" height="11" fill="#fff" stroke="#8ea2d0"/><rect x="970" y="677" width="13" height="3" fill="#f0a090"/><rect x="970" y="680" width="4" height="4" fill="#e8604a"/><rect x="974" y="677" width="4" height="3" fill="#f0c88a"/><rect x="978" y="683" width="5" height="4" fill="#7ab648"/><rect x="974" y="680" width="1" height="7" fill="#8ea2d0"/><rect x="978" y="680" width="1" height="7" fill="#8ea2d0"/><rect x="970" y="683" width="13" height="1" fill="#8ea2d0"/><rect x="970" y="680" width="13" height="1" fill="#8ea2d0"/></g>
<path d="M993.500 678.500 h3.500 l1 2.500 v6.500 h-5.500 v-6 z M1001 678.500 h3.500 l1 3 v6 h-5.500 v-6.500 z" fill="#93abdc" stroke="#5a74b0" stroke-width=".8"/><rect x="997.800" y="680.500" width="3.400" height="3" fill="#5a74b0"/>
<path d="M1074 677.500 l-4.500 4.500 l4.500 4.500" fill="none" stroke="#333" stroke-width="1.700"/>
<path d="M1902.500 677.500 l4.500 4.500 l-4.500 4.500" fill="none" stroke="#333" stroke-width="1.700"/>
</svg>
<div class="a" style="left:0px;top:698px;width:1920px;height:308px;background:#ffffff;"></div>
<div class="a" style="left:0px;top:698px;width:1920px;height:1px;background:#cfe6fb;"></div>
<div class="a" style="left:0px;top:699px;width:1920px;height:2px;background:#e6f2fc;"></div>
<div class="a" style="left:0px;top:698px;width:1px;height:307px;background:#cfe6fb;"></div>
<div class="a" style="left:1px;top:699px;width:2px;height:305px;background:#e6f2fc;"></div>
<div class="a" style="left:1917px;top:699px;width:2px;height:305px;background:#e6f2fc;"></div>
<div class="a" style="left:1919px;top:698px;width:1px;height:307px;background:#cfe6fb;"></div>
<div class="a" style="left:0px;top:1003px;width:1920px;height:1px;background:#e6f2fc;"></div>
<div class="a" style="left:0px;top:1004px;width:1920px;height:1px;background:#cfe6fb;"></div>
<div class="a" style="left:3px;top:701px;width:1914px;height:28px;background:#ffffff;border:1px solid #dadada;box-sizing:border-box;"></div>
<span class="t" style="left:8.20px;letter-spacing:-0.366px;top:708.20px;font-size:15px;line-height:15px;color:#262626;">ф. № 1 Ввод 1 сч.</span>
<span class="t" style="left:131.00px;letter-spacing:-0.400px;top:708.20px;font-size:15px;line-height:15px;color:#262626;">№5065770</span>
<span class="t" style="left:207.30px;letter-spacing:-0.033px;top:708.20px;font-size:15px;line-height:15px;color:#262626;">Пол. мощность А (кВА)</span>
<svg style="left:1846px;top:703px" width="74" height="26" viewBox="1846 703 74 26">
<defs><linearGradient id="mx" x1="0" y1="0" x2="0" y2="1"><stop offset="0" stop-color="#bdd4ec"/><stop offset=".5" stop-color="#c9dcf0"/><stop offset=".5" stop-color="#d6e5f5"/><stop offset="1" stop-color="#e1edf9"/></linearGradient>
<linearGradient id="mi" x1="0" y1="0" x2="0" y2="1"><stop offset="0" stop-color="#fff"/><stop offset="1" stop-color="#e4e4e4"/></linearGradient></defs>
<rect x="1849.600" y="706.500" width="18" height="18" rx="1.800" fill="url(#mx)" stroke="#5b7199" stroke-width="1.100"/>
<rect x="1852.800" y="710.600" width="11.400" height="10.500" rx="1" fill="url(#mi)" stroke="#3f4560" stroke-width="1.300"/>
<rect x="1856.500" y="714.500" width="4" height="3" fill="#9cc0e6" stroke="#3f4560" stroke-width="1"/>
<path d="M1875.500 707.600 h9.200 v2 l-1.700 1.200 v3.300 l3.800 3.800 v.9 h-13.400 v-.9 l3.800 -3.800 v-3.300 l-1.700 -1.200 z" fill="#f4f4f4" stroke="#7c7c7c" stroke-width="1.100"/>
<path d="M1881.500 710 v6.500" stroke="#c4c4c4" stroke-width="2.200"/>
<path d="M1879.700 719 v5" stroke="#7c7c7c" stroke-width="1.300"/>
</svg>
<svg style="left:1894px;top:707px" width="17" height="17" viewBox="0 0 17 17"><rect x=".5" y=".5" width="16" height="16" fill="#c9504f" stroke="#c43f42"/><path d="M6.0 5.9 L11.0 11.1 M11.0 5.9 L6.0 11.1" stroke="#fff" stroke-width="1.900"/></svg>
<div class="a" style="left:4px;top:734px;width:1914px;height:269px;background:#efefef;border:1px solid #9a9a9a;box-sizing:border-box;border-left:none;border-top:none;"></div>
<div class="a" style="left:3px;top:1002px;width:2px;height:1px;background:#9a9a9a;"></div>
<span class="t" style="left:67.60px;letter-spacing:-0.430px;top:747.70px;font-size:15px;line-height:15px;color:#1a1a1a;">ф. № 1 Ввод 1 сч.</span>
<span class="t" style="left:189.30px;letter-spacing:-0.263px;top:747.70px;font-size:15px;line-height:15px;color:#1a1a1a;">№5065770</span>
<span class="t" style="left:266.70px;letter-spacing:-0.052px;top:747.70px;font-size:15px;line-height:15px;color:#1a1a1a;">Пол. мощность А (кВА)</span>
<svg style="left:0;top:730px" width="1920" height="280" viewBox="0 730 1920 280">
<defs><filter id="bl2" x="-20%" y="-30%" width="140%" height="160%"><feGaussianBlur stdDeviation="1"/></filter></defs>
<g shape-rendering="crispEdges">
<path d="M120 944.5 H1859" stroke="#808080" stroke-dasharray="3 3"/>
<path d="M120 920.5 H1859" stroke="#808080" stroke-dasharray="3 3"/>
<path d="M120 896.5 H1859" stroke="#808080" stroke-dasharray="3 3"/>
<path d="M120 872.5 H1859" stroke="#808080" stroke-dasharray="3 3"/>
<path d="M120 848.5 H1859" stroke="#808080" stroke-dasharray="3 3"/>
<path d="M120 824.5 H1859" stroke="#808080" stroke-dasharray="3 3"/>
<path d="M120 800.5 H1859" stroke="#808080" stroke-dasharray="3 3"/>
<path d="M132.5 797 V967" stroke="#808080" stroke-dasharray="3 3"/>
<path d="M173.5 797 V967" stroke="#808080" stroke-dasharray="3 3"/>
<path d="M215.5 797 V967" stroke="#808080" stroke-dasharray="3 3"/>
<path d="M256.5 797 V967" stroke="#808080" stroke-dasharray="3 3"/>
<path d="M297.5 797 V967" stroke="#808080" stroke-dasharray="3 3"/>
<path d="M338.5 797 V967" stroke="#808080" stroke-dasharray="3 3"/>
<path d="M379.5 797 V967" stroke="#808080" stroke-dasharray="3 3"/>
<path d="M421.5 797 V967" stroke="#808080" stroke-dasharray="3 3"/>
<path d="M462.5 797 V967" stroke="#808080" stroke-dasharray="3 3"/>
<path d="M503.5 797 V967" stroke="#808080" stroke-dasharray="3 3"/>
<path d="M544.5 797 V967" stroke="#808080" stroke-dasharray="3 3"/>
<path d="M585.5 797 V967" stroke="#808080" stroke-dasharray="3 3"/>
<path d="M627.5 797 V967" stroke="#808080" stroke-dasharray="3 3"/>
<path d="M668.5 797 V967" stroke="#808080" stroke-dasharray="3 3"/>
<path d="M709.5 797 V967" stroke="#808080" stroke-dasharray="3 3"/>
<path d="M750.5 797 V967" stroke="#808080" stroke-dasharray="3 3"/>
<path d="M791.5 797 V967" stroke="#808080" stroke-dasharray="3 3"/>
<path d="M832.5 797 V967" stroke="#808080" stroke-dasharray="3 3"/>
<path d="M874.5 797 V967" stroke="#808080" stroke-dasharray="3 3"/>
<path d="M915.5 797 V967" stroke="#808080" stroke-dasharray="3 3"/>
<path d="M956.5 797 V967" stroke="#808080" stroke-dasharray="3 3"/>
<path d="M997.5 797 V967" stroke="#808080" stroke-dasharray="3 3"/>
<path d="M1038.5 797 V967" stroke="#808080" stroke-dasharray="3 3"/>
<path d="M1080.5 797 V967" stroke="#808080" stroke-dasharray="3 3"/>
<path d="M1121.5 797 V967" stroke="#808080" stroke-dasharray="3 3"/>
<path d="M1162.5 797 V967" stroke="#808080" stroke-dasharray="3 3"/>
<path d="M1203.5 797 V967" stroke="#808080" stroke-dasharray="3 3"/>
<path d="M1244.5 797 V967" stroke="#808080" stroke-dasharray="3 3"/>
<path d="M1285.5 797 V967" stroke="#808080" stroke-dasharray="3 3"/>
<path d="M1327.5 797 V967" stroke="#808080" stroke-dasharray="3 3"/>
<path d="M1368.5 797 V967" stroke="#808080" stroke-dasharray="3 3"/>
<path d="M1409.5 797 V967" stroke="#808080" stroke-dasharray="3 3"/>
<path d="M1450.5 797 V967" stroke="#808080" stroke-dasharray="3 3"/>
<path d="M1491.5 797 V967" stroke="#808080" stroke-dasharray="3 3"/>
<path d="M1533.5 797 V967" stroke="#808080" stroke-dasharray="3 3"/>
<path d="M1574.5 797 V967" stroke="#808080" stroke-dasharray="3 3"/>
<path d="M1615.5 797 V967" stroke="#808080" stroke-dasharray="3 3"/>
<path d="M1656.5 797 V967" stroke="#808080" stroke-dasharray="3 3"/>
<path d="M1697.5 797 V967" stroke="#808080" stroke-dasharray="3 3"/>
<path d="M1739.5 797 V967" stroke="#808080" stroke-dasharray="3 3"/>
<path d="M1780.5 797 V967" stroke="#808080" stroke-dasharray="3 3"/>
<path d="M1821.5 797 V967" stroke="#808080" stroke-dasharray="3 3"/>
<rect x="118" y="795" width="1742" height="2" fill="#000"/>
<rect x="118" y="795" width="2" height="174" fill="#000"/>
<rect x="1858.5" y="795" width="1.300" height="174" fill="#000"/>
<rect x="118" y="967" width="1742" height="2" fill="#000"/>
<rect x="132" y="792" width="1" height="3" fill="#505050"/>
<rect x="153" y="794" width="1" height="1" fill="#505050"/>
<rect x="173" y="794" width="1" height="1" fill="#505050"/>
<rect x="194" y="794" width="1" height="1" fill="#505050"/>
<rect x="215" y="792" width="1" height="3" fill="#505050"/>
<rect x="235" y="794" width="1" height="1" fill="#505050"/>
<rect x="256" y="794" width="1" height="1" fill="#505050"/>
<rect x="276" y="794" width="1" height="1" fill="#505050"/>
<rect x="297" y="792" width="1" height="3" fill="#505050"/>
<rect x="318" y="794" width="1" height="1" fill="#505050"/>
<rect x="338" y="794" width="1" height="1" fill="#505050"/>
<rect x="359" y="794" width="1" height="1" fill="#505050"/>
<rect x="379" y="792" width="1" height="3" fill="#505050"/>
<rect x="400" y="794" width="1" height="1" fill="#505050"/>
<rect x="421" y="794" width="1" height="1" fill="#505050"/>
<rect x="441" y="794" width="1" height="1" fill="#505050"/>
<rect x="462" y="792" width="1" height="3" fill="#505050"/>
<rect x="482" y="794" width="1" height="1" fill="#505050"/>
<rect x="503" y="794" width="1" height="1" fill="#505050"/>
<rect x="524" y="794" width="1" height="1" fill="#505050"/>
<rect x="544" y="792" width="1" height="3" fill="#505050"/>
<rect x="565" y="794" width="1" height="1" fill="#505050"/>
<rect x="585" y="794" width="1" height="1" fill="#505050"/>
<rect x="606" y="794" width="1" height="1" fill="#505050"/>
<rect x="627" y="792" width="1" height="3" fill="#505050"/>
<rect x="647" y="794" width="1" height="1" fill="#505050"/>
<rect x="668" y="794" width="1" height="1" fill="#505050"/>
<rect x="688" y="794" width="1" height="1" fill="#505050"/>
<rect x="709" y="792" width="1" height="3" fill="#505050"/>
<rect x="729" y="794" width="1" height="1" fill="#505050"/>
<rect x="750" y="794" width="1" height="1" fill="#505050"/>
<rect x="771" y="794" width="1" height="1" fill="#505050"/>
<rect x="791" y="792" width="1" height="3" fill="#505050"/>
<rect x="812" y="794" width="1" height="1" fill="#505050"/>
<rect x="832" y="794" width="1" height="1" fill="#505050"/>
<rect x="853" y="794" width="1" height="1" fill="#505050"/>
<rect x="874" y="792" width="1" height="3" fill="#505050"/>
<rect x="894" y="794" width="1" height="1" fill="#505050"/>
<rect x="915" y="794" width="1" height="1" fill="#505050"/>
<rect x="935" y="794" width="1" height="1" fill="#505050"/>
<rect x="956" y="792" width="1" height="3" fill="#505050"/>
<rect x="977" y="794" width="1" height="1" fill="#505050"/>
<rect x="997" y="794" width="1" height="1" fill="#505050"/>
<rect x="1018" y="794" width="1" height="1" fill="#505050"/>
<rect x="1038" y="792" width="1" height="3" fill="#505050"/>
<rect x="1059" y="794" width="1" height="1" fill="#505050"/>
<rect x="1080" y="794" width="1" height="1" fill="#505050"/>
<rect x="1100" y="794" width="1" height="1" fill="#505050"/>
<rect x="1121" y="792" width="1" height="3" fill="#505050"/>
<rect x="1141" y="794" width="1" height="1" fill="#505050"/>
<rect x="1162" y="794" width="1" height="1" fill="#505050"/>
<rect x="1183" y="794" width="1" height="1" fill="#505050"/>
<rect x="1203" y="792" width="1" height="3" fill="#505050"/>
<rect x="1224" y="794" width="1" height="1" fill="#505050"/>
<rect x="1244" y="794" width="1" height="1" fill="#505050"/>
<rect x="1265" y="794" width="1" height="1" fill="#505050"/>
<rect x="1285" y="792" width="1" height="3" fill="#505050"/>
<rect x="1306" y="794" width="1" height="1" fill="#505050"/>
<rect x="1327" y="794" width="1" height="1" fill="#505050"/>
<rect x="1347" y="794" width="1" height="1" fill="#505050"/>
<rect x="1368" y="792" width="1" height="3" fill="#505050"/>
<rect x="1388" y="794" width="1" height="1" fill="#505050"/>
<rect x="1409" y="794" width="1" height="1" fill="#505050"/>
<rect x="1430" y="794" width="1" height="1" fill="#505050"/>
<rect x="1450" y="792" width="1" height="3" fill="#505050"/>
<rect x="1471" y="794" width="1" height="1" fill="#505050"/>
<rect x="1491" y="794" width="1" height="1" fill="#505050"/>
<rect x="1512" y="794" width="1" height="1" fill="#505050"/>
<rect x="1533" y="792" width="1" height="3" fill="#505050"/>
<rect x="1553" y="794" width="1" height="1" fill="#505050"/>
<rect x="1574" y="794" width="1" height="1" fill="#505050"/>
<rect x="1594" y="794" width="1" height="1" fill="#505050"/>
<rect x="1615" y="792" width="1" height="3" fill="#505050"/>
<rect x="1636" y="794" width="1" height="1" fill="#505050"/>
<rect x="1656" y="794" width="1" height="1" fill="#505050"/>
<rect x="1677" y="794" width="1" height="1" fill="#505050"/>
<rect x="1697" y="792" width="1" height="3" fill="#505050"/>
<rect x="1718" y="794" width="1" height="1" fill="#505050"/>
<rect x="1739" y="794" width="1" height="1" fill="#505050"/>
<rect x="1759" y="794" width="1" height="1" fill="#505050"/>
<rect x="1780" y="792" width="1" height="3" fill="#505050"/>
<rect x="1800" y="794" width="1" height="1" fill="#505050"/>
<rect x="1821" y="794" width="1" height="1" fill="#505050"/>
<rect x="1841" y="794" width="1" height="1" fill="#505050"/>
<rect x="122" y="969" width="1" height="2" fill="#505050"/>
<rect x="132" y="969" width="1" height="4" fill="#505050"/>
<rect x="143" y="969" width="1" height="2" fill="#505050"/>
<rect x="153" y="969" width="1" height="2" fill="#505050"/>
<rect x="163" y="969" width="1" height="2" fill="#505050"/>
<rect x="173" y="969" width="1" height="4" fill="#505050"/>
<rect x="184" y="969" width="1" height="2" fill="#505050"/>
<rect x="194" y="969" width="1" height="2" fill="#505050"/>
<rect x="204" y="969" width="1" height="2" fill="#505050"/>
<rect x="215" y="969" width="1" height="4" fill="#505050"/>
<rect x="225" y="969" width="1" height="2" fill="#505050"/>
<rect x="235" y="969" width="1" height="2" fill="#505050"/>
<rect x="246" y="969" width="1" height="2" fill="#505050"/>
<rect x="256" y="969" width="1" height="4" fill="#505050"/>
<rect x="266" y="969" width="1" height="2" fill="#505050"/>
<rect x="276" y="969" width="1" height="2" fill="#505050"/>
<rect x="287" y="969" width="1" height="2" fill="#505050"/>
<rect x="297" y="969" width="1" height="4" fill="#505050"/>
<rect x="307" y="969" width="1" height="2" fill="#505050"/>
<rect x="318" y="969" width="1" height="2" fill="#505050"/>
<rect x="328" y="969" width="1" height="2" fill="#505050"/>
<rect x="338" y="969" width="1" height="4" fill="#505050"/>
<rect x="349" y="969" width="1" height="2" fill="#505050"/>
<rect x="359" y="969" width="1" height="2" fill="#505050"/>
<rect x="369" y="969" width="1" height="2" fill="#505050"/>
<rect x="379" y="969" width="1" height="4" fill="#505050"/>
<rect x="390" y="969" width="1" height="2" fill="#505050"/>
<rect x="400" y="969" width="1" height="2" fill="#505050"/>
<rect x="410" y="969" width="1" height="2" fill="#505050"/>
<rect x="421" y="969" width="1" height="4" fill="#505050"/>
<rect x="431" y="969" width="1" height="2" fill="#505050"/>
<rect x="441" y="969" width="1" height="2" fill="#505050"/>
<rect x="451" y="969" width="1" height="2" fill="#505050"/>
<rect x="462" y="969" width="1" height="4" fill="#505050"/>
<rect x="472" y="969" width="1" height="2" fill="#505050"/>
<rect x="482" y="969" width="1" height="2" fill="#505050"/>
<rect x="493" y="969" width="1" height="2" fill="#505050"/>
<rect x="503" y="969" width="1" height="4" fill="#505050"/>
<rect x="513" y="969" width="1" height="2" fill="#505050"/>
<rect x="524" y="969" width="1" height="2" fill="#505050"/>
<rect x="534" y="969" width="1" height="2" fill="#505050"/>
<rect x="544" y="969" width="1" height="4" fill="#505050"/>
<rect x="554" y="969" width="1" height="2" fill="#505050"/>
<rect x="565" y="969" width="1" height="2" fill="#505050"/>
<rect x="575" y="969" width="1" height="2" fill="#505050"/>
<rect x="585" y="969" width="1" height="4" fill="#505050"/>
<rect x="596" y="969" width="1" height="2" fill="#505050"/>
<rect x="606" y="969" width="1" height="2" fill="#505050"/>
<rect x="616" y="969" width="1" height="2" fill="#505050"/>
<rect x="627" y="969" width="1" height="4" fill="#505050"/>
<rect x="637" y="969" width="1" height="2" fill="#505050"/>
<rect x="647" y="969" width="1" height="2" fill="#505050"/>
<rect x="657" y="969" width="1" height="2" fill="#505050"/>
<rect x="668" y="969" width="1" height="4" fill="#505050"/>
<rect x="678" y="969" width="1" height="2" fill="#505050"/>
<rect x="688" y="969" width="1" height="2" fill="#505050"/>
<rect x="699" y="969" width="1" height="2" fill="#505050"/>
<rect x="709" y="969" width="1" height="4" fill="#505050"/>
<rect x="719" y="969" width="1" height="2" fill="#505050"/>
<rect x="729" y="969" width="1" height="2" fill="#505050"/>
<rect x="740" y="969" width="1" height="2" fill="#505050"/>
<rect x="750" y="969" width="1" height="4" fill="#505050"/>
<rect x="760" y="969" width="1" height="2" fill="#505050"/>
<rect x="771" y="969" width="1" height="2" fill="#505050"/>
<rect x="781" y="969" width="1" height="2" fill="#505050"/>
<rect x="791" y="969" width="1" height="4" fill="#505050"/>
<rect x="802" y="969" width="1" height="2" fill="#505050"/>
<rect x="812" y="969" width="1" height="2" fill="#505050"/>
<rect x="822" y="969" width="1" height="2" fill="#505050"/>
<rect x="832" y="969" width="1" height="4" fill="#505050"/>
<rect x="843" y="969" width="1" height="2" fill="#505050"/>
<rect x="853" y="969" width="1" height="2" fill="#505050"/>
<rect x="863" y="969" width="1" height="2" fill="#505050"/>
<rect x="874" y="969" width="1" height="4" fill="#505050"/>
<rect x="884" y="969" width="1" height="2" fill="#505050"/>
<rect x="894" y="969" width="1" height="2" fill="#505050"/>
<rect x="905" y="969" width="1" height="2" fill="#505050"/>
<rect x="915" y="969" width="1" height="4" fill="#505050"/>
<rect x="925" y="969" width="1" height="2" fill="#505050"/>
<rect x="935" y="969" width="1" height="2" fill="#505050"/>
<rect x="946" y="969" width="1" height="2" fill="#505050"/>
<rect x="956" y="969" width="1" height="4" fill="#505050"/>
<rect x="966" y="969" width="1" height="2" fill="#505050"/>
<rect x="977" y="969" width="1" height="2" fill="#505050"/>
<rect x="987" y="969" width="1" height="2" fill="#505050"/>
<rect x="997" y="969" width="1" height="4" fill="#505050"/>
<rect x="1007" y="969" width="1" height="2" fill="#505050"/>
<rect x="1018" y="969" width="1" height="2" fill="#505050"/>
<rect x="1028" y="969" width="1" height="2" fill="#505050"/>
<rect x="1038" y="969" width="1" height="4" fill="#505050"/>
<rect x="1049" y="969" width="1" height="2" fill="#505050"/>
<rect x="1059" y="969" width="1" height="2" fill="#505050"/>
<rect x="1069" y="969" width="1" height="2" fill="#505050"/>
<rect x="1080" y="969" width="1" height="4" fill="#505050"/>
<rect x="1090" y="969" width="1" height="2" fill="#505050"/>
<rect x="1100" y="969" width="1" height="2" fill="#505050"/>
<rect x="1110" y="969" width="1" height="2" fill="#505050"/>
<rect x="1121" y="969" width="1" height="4" fill="#505050"/>
<rect x="1131" y="969" width="1" height="2" fill="#505050"/>
<rect x="1141" y="969" width="1" height="2" fill="#505050"/>
<rect x="1152" y="969" width="1" height="2" fill="#505050"/>
<rect x="1162" y="969" width="1" height="4" fill="#505050"/>
<rect x="1172" y="969" width="1" height="2" fill="#505050"/>
<rect x="1183" y="969" width="1" height="2" fill="#505050"/>
<rect x="1193" y="969" width="1" height="2" fill="#505050"/>
<rect x="1203" y="969" width="1" height="4" fill="#505050"/>
<rect x="1213" y="969" width="1" height="2" fill="#505050"/>
<rect x="1224" y="969" width="1" height="2" fill="#505050"/>
<rect x="1234" y="969" width="1" height="2" fill="#505050"/>
<rect x="1244" y="969" width="1" height="4" fill="#505050"/>
<rect x="1255" y="969" width="1" height="2" fill="#505050"/>
<rect x="1265" y="969" width="1" height="2" fill="#505050"/>
<rect x="1275" y="969" width="1" height="2" fill="#505050"/>
<rect x="1285" y="969" width="1" height="4" fill="#505050"/>
<rect x="1296" y="969" width="1" height="2" fill="#505050"/>
<rect x="1306" y="969" width="1" height="2" fill="#505050"/>
<rect x="1316" y="969" width="1" height="2" fill="#505050"/>
<rect x="1327" y="969" width="1" height="4" fill="#505050"/>
<rect x="1337" y="969" width="1" height="2" fill="#505050"/>
<rect x="1347" y="969" width="1" height="2" fill="#505050"/>
<rect x="1358" y="969" width="1" height="2" fill="#505050"/>
<rect x="1368" y="969" width="1" height="4" fill="#505050"/>
<rect x="1378" y="969" width="1" height="2" fill="#505050"/>
<rect x="1388" y="969" width="1" height="2" fill="#505050"/>
<rect x="1399" y="969" width="1" height="2" fill="#505050"/>
<rect x="1409" y="969" width="1" height="4" fill="#505050"/>
<rect x="1419" y="969" width="1" height="2" fill="#505050"/>
<rect x="1430" y="969" width="1" height="2" fill="#505050"/>
<rect x="1440" y="969" width="1" height="2" fill="#505050"/>
<rect x="1450" y="969" width="1" height="4" fill="#505050"/>
<rect x="1461" y="969" width="1" height="2" fill="#505050"/>
<rect x="1471" y="969" width="1" height="2" fill="#505050"/>
<rect x="1481" y="969" width="1" height="2" fill="#505050"/>
<rect x="1491" y="969" width="1" height="4" fill="#505050"/>
<rect x="1502" y="969" width="1" height="2" fill="#505050"/>
<rect x="1512" y="969" width="1" height="2" fill="#505050"/>
<rect x="1522" y="969" width="1" height="2" fill="#505050"/>
<rect x="1533" y="969" width="1" height="4" fill="#505050"/>
<rect x="1543" y="969" width="1" height="2" fill="#505050"/>
<rect x="1553" y="969" width="1" height="2" fill="#505050"/>
<rect x="1563" y="969" width="1" height="2" fill="#505050"/>
<rect x="1574" y="969" width="1" height="4" fill="#505050"/>
<rect x="1584" y="969" width="1" height="2" fill="#505050"/>
<rect x="1594" y="969" width="1" height="2" fill="#505050"/>
<rect x="1605" y="969" width="1" height="2" fill="#505050"/>
<rect x="1615" y="969" width="1" height="4" fill="#505050"/>
<rect x="1625" y="969" width="1" height="2" fill="#505050"/>
<rect x="1636" y="969" width="1" height="2" fill="#505050"/>
<rect x="1646" y="969" width="1" height="2" fill="#505050"/>
<rect x="1656" y="969" width="1" height="4" fill="#505050"/>
<rect x="1666" y="969" width="1" height="2" fill="#505050"/>
<rect x="1677" y="969" width="1" height="2" fill="#505050"/>
<rect x="1687" y="969" width="1" height="2" fill="#505050"/>
<rect x="1697" y="969" width="1" height="4" fill="#505050"/>
<rect x="1708" y="969" width="1" height="2" fill="#505050"/>
<rect x="1718" y="969" width="1" height="2" fill="#505050"/>
<rect x="1728" y="969" width="1" height="2" fill="#505050"/>
<rect x="1739" y="969" width="1" height="4" fill="#505050"/>
<rect x="1749" y="969" width="1" height="2" fill="#505050"/>
<rect x="1759" y="969" width="1" height="2" fill="#505050"/>
<rect x="1769" y="969" width="1" height="2" fill="#505050"/>
<rect x="1780" y="969" width="1" height="4" fill="#505050"/>
<rect x="1790" y="969" width="1" height="2" fill="#505050"/>
<rect x="1800" y="969" width="1" height="2" fill="#505050"/>
<rect x="1811" y="969" width="1" height="2" fill="#505050"/>
<rect x="1821" y="969" width="1" height="4" fill="#505050"/>
<rect x="1831" y="969" width="1" height="2" fill="#505050"/>
<rect x="1841" y="969" width="1" height="2" fill="#505050"/>
<rect x="1852" y="969" width="1" height="2" fill="#505050"/>
<rect x="115" y="968" width="3" height="1" fill="#505050"/>
<rect x="117" y="962" width="1" height="1" fill="#8c8c8c"/>
<rect x="117" y="956" width="1" height="1" fill="#8c8c8c"/>
<rect x="117" y="950" width="1" height="1" fill="#8c8c8c"/>
<rect x="115" y="944" width="3" height="1" fill="#505050"/>
<rect x="117" y="938" width="1" height="1" fill="#8c8c8c"/>
<rect x="117" y="932" width="1" height="1" fill="#8c8c8c"/>
<rect x="117" y="926" width="1" height="1" fill="#8c8c8c"/>
<rect x="115" y="920" width="3" height="1" fill="#505050"/>
<rect x="117" y="914" width="1" height="1" fill="#8c8c8c"/>
<rect x="117" y="908" width="1" height="1" fill="#8c8c8c"/>
<rect x="117" y="902" width="1" height="1" fill="#8c8c8c"/>
<rect x="115" y="896" width="3" height="1" fill="#505050"/>
<rect x="117" y="890" width="1" height="1" fill="#8c8c8c"/>
<rect x="117" y="884" width="1" height="1" fill="#8c8c8c"/>
<rect x="117" y="878" width="1" height="1" fill="#8c8c8c"/>
<rect x="115" y="872" width="3" height="1" fill="#505050"/>
<rect x="117" y="866" width="1" height="1" fill="#8c8c8c"/>
<rect x="117" y="860" width="1" height="1" fill="#8c8c8c"/>
<rect x="117" y="854" width="1" height="1" fill="#8c8c8c"/>
<rect x="115" y="848" width="3" height="1" fill="#505050"/>
<rect x="117" y="842" width="1" height="1" fill="#8c8c8c"/>
<rect x="117" y="836" width="1" height="1" fill="#8c8c8c"/>
<rect x="117" y="830" width="1" height="1" fill="#8c8c8c"/>
<rect x="115" y="824" width="3" height="1" fill="#505050"/>
<rect x="117" y="818" width="1" height="1" fill="#8c8c8c"/>
<rect x="117" y="812" width="1" height="1" fill="#8c8c8c"/>
<rect x="117" y="806" width="1" height="1" fill="#8c8c8c"/>
<rect x="115" y="800" width="3" height="1" fill="#505050"/>
<rect x="122" y="838" width="6" height="129" fill="#000"/>
<rect x="123" y="839" width="4" height="128" fill="#0000ff"/>
<rect x="124" y="818" width="1" height="21" fill="#fff"/>
<rect x="369" y="836" width="6" height="131" fill="#000"/>
<rect x="370" y="837" width="4" height="130" fill="#0000ff"/>
<rect x="371" y="816" width="1" height="21" fill="#fff"/>
<rect x="618" y="836" width="6" height="131" fill="#000"/>
<rect x="619" y="837" width="4" height="130" fill="#0000ff"/>
<rect x="620" y="816" width="1" height="21" fill="#fff"/>
<rect x="865" y="836" width="6" height="131" fill="#000"/>
<rect x="866" y="837" width="4" height="130" fill="#0000ff"/>
<rect x="867" y="816" width="1" height="21" fill="#fff"/>
<rect x="1021" y="836" width="6" height="131" fill="#000"/>
<rect x="1022" y="837" width="4" height="130" fill="#0000ff"/>
<rect x="1023" y="816" width="1" height="21" fill="#fff"/>
<rect x="1111" y="836" width="6" height="131" fill="#000"/>
<rect x="1112" y="837" width="4" height="130" fill="#0000ff"/>
<rect x="1113" y="816" width="1" height="21" fill="#fff"/>
<rect x="1358" y="838" width="6" height="129" fill="#000"/>
<rect x="1359" y="839" width="4" height="128" fill="#0000ff"/>
<rect x="1360" y="818" width="1" height="21" fill="#fff"/>
<rect x="1605" y="836" width="6" height="131" fill="#000"/>
<rect x="1606" y="837" width="4" height="130" fill="#0000ff"/>
<rect x="1607" y="816" width="1" height="21" fill="#fff"/>
<rect x="1852" y="836" width="6" height="131" fill="#000"/>
<rect x="1853" y="837" width="4" height="130" fill="#0000ff"/>
<rect x="1854" y="816" width="1" height="21" fill="#fff"/>
</g>
<text x="112.300" y="973.2" font-size="12" fill="#000" stroke="#000" stroke-width=".33" text-anchor="end" style="text-shadow:1px 1px 1px rgba(0,0,0,.22)">0</text>
<text x="112.300" y="949.2" font-size="12" fill="#000" stroke="#000" stroke-width=".33" text-anchor="end" style="text-shadow:1px 1px 1px rgba(0,0,0,.22)" textLength="23" lengthAdjust="spacingAndGlyphs">0,01</text>
<text x="112.300" y="925.2" font-size="12" fill="#000" stroke="#000" stroke-width=".33" text-anchor="end" style="text-shadow:1px 1px 1px rgba(0,0,0,.22)" textLength="23" lengthAdjust="spacingAndGlyphs">0,02</text>
<text x="112.300" y="901.2" font-size="12" fill="#000" stroke="#000" stroke-width=".33" text-anchor="end" style="text-shadow:1px 1px 1px rgba(0,0,0,.22)" textLength="23" lengthAdjust="spacingAndGlyphs">0,03</text>
<text x="112.300" y="877.2" font-size="12" fill="#000" stroke="#000" stroke-width=".33" text-anchor="end" style="text-shadow:1px 1px 1px rgba(0,0,0,.22)" textLength="23" lengthAdjust="spacingAndGlyphs">0,04</text>
<text x="112.300" y="853.2" font-size="12" fill="#000" stroke="#000" stroke-width=".33" text-anchor="end" style="text-shadow:1px 1px 1px rgba(0,0,0,.22)" textLength="23" lengthAdjust="spacingAndGlyphs">0,05</text>
<text x="112.300" y="829.2" font-size="12" fill="#000" stroke="#000" stroke-width=".33" text-anchor="end" style="text-shadow:1px 1px 1px rgba(0,0,0,.22)" textLength="23" lengthAdjust="spacingAndGlyphs">0,06</text>
<text x="112.300" y="805.2" font-size="12" fill="#000" stroke="#000" stroke-width=".33" text-anchor="end" style="text-shadow:1px 1px 1px rgba(0,0,0,.22)" textLength="23" lengthAdjust="spacingAndGlyphs">0,07</text>
<rect x="105.5" y="802.0" width="43.500" height="19.500" fill="#000" opacity=".42" filter="url(#bl2)"/>
<rect x="102.5" y="798.5" width="44" height="20" fill="#ffffe1" stroke="#000" stroke-width="1"/>
<text x="124.5" y="813.8" font-size="12" fill="#000" stroke="#000" stroke-width=".4" text-anchor="middle" textLength="30" lengthAdjust="spacingAndGlyphs">0,054</text>
<rect x="352.5" y="800.0" width="43.500" height="19.500" fill="#000" opacity=".42" filter="url(#bl2)"/>
<rect x="349.5" y="796.5" width="44" height="20" fill="#ffffe1" stroke="#000" stroke-width="1"/>
<text x="371.5" y="811.8" font-size="12" fill="#000" stroke="#000" stroke-width=".4" text-anchor="middle" textLength="30" lengthAdjust="spacingAndGlyphs">0,055</text>
<rect x="601.5" y="800.0" width="43.500" height="19.500" fill="#000" opacity=".42" filter="url(#bl2)"/>
<rect x="598.5" y="796.5" width="44" height="20" fill="#ffffe1" stroke="#000" stroke-width="1"/>
<text x="620.5" y="811.8" font-size="12" fill="#000" stroke="#000" stroke-width=".4" text-anchor="middle" textLength="30" lengthAdjust="spacingAndGlyphs">0,055</text>
<rect x="848.5" y="800.0" width="43.500" height="19.500" fill="#000" opacity=".42" filter="url(#bl2)"/>
<rect x="845.5" y="796.5" width="44" height="20" fill="#ffffe1" stroke="#000" stroke-width="1"/>
<text x="867.5" y="811.8" font-size="12" fill="#000" stroke="#000" stroke-width=".4" text-anchor="middle" textLength="30" lengthAdjust="spacingAndGlyphs">0,055</text>
<rect x="1004.5" y="800.0" width="43.500" height="19.500" fill="#000" opacity=".42" filter="url(#bl2)"/>
<rect x="1001.5" y="796.5" width="44" height="20" fill="#ffffe1" stroke="#000" stroke-width="1"/>
<text x="1023.5" y="811.8" font-size="12" fill="#000" stroke="#000" stroke-width=".4" text-anchor="middle" textLength="30" lengthAdjust="spacingAndGlyphs">0,055</text>
<rect x="1094.5" y="800.0" width="43.500" height="19.500" fill="#000" opacity=".42" filter="url(#bl2)"/>
<rect x="1091.5" y="796.5" width="44" height="20" fill="#ffffe1" stroke="#000" stroke-width="1"/>
<text x="1113.5" y="811.8" font-size="12" fill="#000" stroke="#000" stroke-width=".4" text-anchor="middle" textLength="30" lengthAdjust="spacingAndGlyphs">0,055</text>
<rect x="1341.5" y="802.0" width="43.500" height="19.500" fill="#000" opacity=".42" filter="url(#bl2)"/>
<rect x="1338.5" y="798.5" width="44" height="20" fill="#ffffe1" stroke="#000" stroke-width="1"/>
<text x="1360.5" y="813.8" font-size="12" fill="#000" stroke="#000" stroke-width=".4" text-anchor="middle" textLength="30" lengthAdjust="spacingAndGlyphs">0,054</text>
<rect x="1588.5" y="800.0" width="43.500" height="19.500" fill="#000" opacity=".42" filter="url(#bl2)"/>
<rect x="1585.5" y="796.5" width="44" height="20" fill="#ffffe1" stroke="#000" stroke-width="1"/>
<text x="1607.5" y="811.8" font-size="12" fill="#000" stroke="#000" stroke-width=".4" text-anchor="middle" textLength="30" lengthAdjust="spacingAndGlyphs">0,055</text>
<rect x="1835.5" y="800.0" width="43.500" height="19.500" fill="#000" opacity=".42" filter="url(#bl2)"/>
<rect x="1832.5" y="796.5" width="44" height="20" fill="#ffffe1" stroke="#000" stroke-width="1"/>
<text x="1854.5" y="811.8" font-size="12" fill="#000" stroke="#000" stroke-width=".4" text-anchor="middle" textLength="30" lengthAdjust="spacingAndGlyphs">0,055</text>
<text x="133.3" y="785.6" font-size="12" fill="#000" stroke="#000" stroke-width=".4" text-anchor="middle" textLength="60" lengthAdjust="spacingAndGlyphs">15.10.2018</text>
<text x="215.7" y="785.6" font-size="12" fill="#000" stroke="#000" stroke-width=".4" text-anchor="middle" textLength="60" lengthAdjust="spacingAndGlyphs">15.10.2018</text>
<text x="298.0" y="785.6" font-size="12" fill="#000" stroke="#000" stroke-width=".4" text-anchor="middle" textLength="60" lengthAdjust="spacingAndGlyphs">15.10.2018</text>
<text x="380.4" y="785.6" font-size="12" fill="#000" stroke="#000" stroke-width=".4" text-anchor="middle" textLength="60" lengthAdjust="spacingAndGlyphs">15.10.2018</text>
<text x="462.8" y="785.6" font-size="12" fill="#000" stroke="#000" stroke-width=".4" text-anchor="middle" textLength="60" lengthAdjust="spacingAndGlyphs">15.10.2018</text>
<text x="545.2" y="785.6" font-size="12" fill="#000" stroke="#000" stroke-width=".4" text-anchor="middle" textLength="60" lengthAdjust="spacingAndGlyphs">15.10.2018</text>
<text x="627.5" y="785.6" font-size="12" fill="#000" stroke="#000" stroke-width=".4" text-anchor="middle" textLength="60" lengthAdjust="spacingAndGlyphs">15.10.2018</text>
<text x="709.9" y="785.6" font-size="12" fill="#000" stroke="#000" stroke-width=".4" text-anchor="middle" textLength="60" lengthAdjust="spacingAndGlyphs">15.10.2018</text>
<text x="792.3" y="785.6" font-size="12" fill="#000" stroke="#000" stroke-width=".4" text-anchor="middle" textLength="60" lengthAdjust="spacingAndGlyphs">15.10.2018</text>
<text x="874.6" y="785.6" font-size="12" fill="#000" stroke="#000" stroke-width=".4" text-anchor="middle" textLength="60" lengthAdjust="spacingAndGlyphs">15.10.2018</text>
<text x="957.0" y="785.6" font-size="12" fill="#000" stroke="#000" stroke-width=".4" text-anchor="middle" textLength="60" lengthAdjust="spacingAndGlyphs">15.10.2018</text>
<text x="1039.4" y="785.6" font-size="12" fill="#000" stroke="#000" stroke-width=".4" text-anchor="middle" textLength="60" lengthAdjust="spacingAndGlyphs">15.10.2018</text>
<text x="1121.7" y="785.6" font-size="12" fill="#000" stroke="#000" stroke-width=".4" text-anchor="middle" textLength="60" lengthAdjust="spacingAndGlyphs">15.10.2018</text>
<text x="1204.1" y="785.6" font-size="12" fill="#000" stroke="#000" stroke-width=".4" text-anchor="middle" textLength="60" lengthAdjust="spacingAndGlyphs">15.10.2018</text>
<text x="1286.5" y="785.6" font-size="12" fill="#000" stroke="#000" stroke-width=".4" text-anchor="middle" textLength="60" lengthAdjust="spacingAndGlyphs">15.10.2018</text>
<text x="1368.9" y="785.6" font-size="12" fill="#000" stroke="#000" stroke-width=".4" text-anchor="middle" textLength="60" lengthAdjust="spacingAndGlyphs">15.10.2018</text>
<text x="1451.2" y="785.6" font-size="12" fill="#000" stroke="#000" stroke-width=".4" text-anchor="middle" textLength="60" lengthAdjust="spacingAndGlyphs">15.10.2018</text>
<text x="1533.6" y="785.6" font-size="12" fill="#000" stroke="#000" stroke-width=".4" text-anchor="middle" textLength="60" lengthAdjust="spacingAndGlyphs">15.10.2018</text>
<text x="1616.0" y="785.6" font-size="12" fill="#000" stroke="#000" stroke-width=".4" text-anchor="middle" textLength="60" lengthAdjust="spacingAndGlyphs">15.10.2018</text>
<text x="1698.3" y="785.6" font-size="12" fill="#000" stroke="#000" stroke-width=".4" text-anchor="middle" textLength="60" lengthAdjust="spacingAndGlyphs">15.10.2018</text>
<text x="1780.7" y="785.6" font-size="12" fill="#000" stroke="#000" stroke-width=".4" text-anchor="middle" textLength="60" lengthAdjust="spacingAndGlyphs">15.10.2018</text>
<text x="132.9" y="989.3" font-size="12.600" fill="#000" stroke="#000" stroke-width=".5" text-anchor="middle" textLength="28.600" lengthAdjust="spacingAndGlyphs" style="text-shadow:1.5px 1px 1.5px rgba(0,0,0,.22)">16:11</text>
<text x="174.1" y="989.3" font-size="12.600" fill="#000" stroke="#000" stroke-width=".5" text-anchor="middle" textLength="28.600" lengthAdjust="spacingAndGlyphs" style="text-shadow:1.5px 1px 1.5px rgba(0,0,0,.22)">16:10</text>
<text x="215.3" y="989.3" font-size="12.600" fill="#000" stroke="#000" stroke-width=".5" text-anchor="middle" textLength="28.600" lengthAdjust="spacingAndGlyphs" style="text-shadow:1.5px 1px 1.5px rgba(0,0,0,.22)">16:10</text>
<text x="256.5" y="989.3" font-size="12.600" fill="#000" stroke="#000" stroke-width=".5" text-anchor="middle" textLength="28.600" lengthAdjust="spacingAndGlyphs" style="text-shadow:1.5px 1px 1.5px rgba(0,0,0,.22)">16:09</text>
<text x="297.6" y="989.3" font-size="12.600" fill="#000" stroke="#000" stroke-width=".5" text-anchor="middle" textLength="28.600" lengthAdjust="spacingAndGlyphs" style="text-shadow:1.5px 1px 1.5px rgba(0,0,0,.22)">16:09</text>
<text x="338.8" y="989.3" font-size="12.600" fill="#000" stroke="#000" stroke-width=".5" text-anchor="middle" textLength="28.600" lengthAdjust="spacingAndGlyphs" style="text-shadow:1.5px 1px 1.5px rgba(0,0,0,.22)">16:08</text>
<text x="380.0" y="989.3" font-size="12.600" fill="#000" stroke="#000" stroke-width=".5" text-anchor="middle" textLength="28.600" lengthAdjust="spacingAndGlyphs" style="text-shadow:1.5px 1px 1.5px rgba(0,0,0,.22)">16:08</text>
<text x="421.2" y="989.3" font-size="12.600" fill="#000" stroke="#000" stroke-width=".5" text-anchor="middle" textLength="28.600" lengthAdjust="spacingAndGlyphs" style="text-shadow:1.5px 1px 1.5px rgba(0,0,0,.22)">16:07</text>
<text x="462.4" y="989.3" font-size="12.600" fill="#000" stroke="#000" stroke-width=".5" text-anchor="middle" textLength="28.600" lengthAdjust="spacingAndGlyphs" style="text-shadow:1.5px 1px 1.5px rgba(0,0,0,.22)">16:07</text>
<text x="503.6" y="989.3" font-size="12.600" fill="#000" stroke="#000" stroke-width=".5" text-anchor="middle" textLength="28.600" lengthAdjust="spacingAndGlyphs" style="text-shadow:1.5px 1px 1.5px rgba(0,0,0,.22)">16:06</text>
<text x="544.8" y="989.3" font-size="12.600" fill="#000" stroke="#000" stroke-width=".5" text-anchor="middle" textLength="28.600" lengthAdjust="spacingAndGlyphs" style="text-shadow:1.5px 1px 1.5px rgba(0,0,0,.22)">16:06</text>
<text x="585.9" y="989.3" font-size="12.600" fill="#000" stroke="#000" stroke-width=".5" text-anchor="middle" textLength="28.600" lengthAdjust="spacingAndGlyphs" style="text-shadow:1.5px 1px 1.5px rgba(0,0,0,.22)">16:05</text>
<text x="627.1" y="989.3" font-size="12.600" fill="#000" stroke="#000" stroke-width=".5" text-anchor="middle" textLength="28.600" lengthAdjust="spacingAndGlyphs" style="text-shadow:1.5px 1px 1.5px rgba(0,0,0,.22)">16:05</text>
<text x="668.3" y="989.3" font-size="12.600" fill="#000" stroke="#000" stroke-width=".5" text-anchor="middle" textLength="28.600" lengthAdjust="spacingAndGlyphs" style="text-shadow:1.5px 1px 1.5px rgba(0,0,0,.22)">16:04</text>
<text x="709.5" y="989.3" font-size="12.600" fill="#000" stroke="#000" stroke-width=".5" text-anchor="middle" textLength="28.600" lengthAdjust="spacingAndGlyphs" style="text-shadow:1.5px 1px 1.5px rgba(0,0,0,.22)">16:04</text>
<text x="750.7" y="989.3" font-size="12.600" fill="#000" stroke="#000" stroke-width=".5" text-anchor="middle" textLength="28.600" lengthAdjust="spacingAndGlyphs" style="text-shadow:1.5px 1px 1.5px rgba(0,0,0,.22)">16:03</text>
<text x="791.9" y="989.3" font-size="12.600" fill="#000" stroke="#000" stroke-width=".5" text-anchor="middle" textLength="28.600" lengthAdjust="spacingAndGlyphs" style="text-shadow:1.5px 1px 1.5px rgba(0,0,0,.22)">16:03</text>
<text x="833.0" y="989.3" font-size="12.600" fill="#000" stroke="#000" stroke-width=".5" text-anchor="middle" textLength="28.600" lengthAdjust="spacingAndGlyphs" style="text-shadow:1.5px 1px 1.5px rgba(0,0,0,.22)">16:02</text>
<text x="874.2" y="989.3" font-size="12.600" fill="#000" stroke="#000" stroke-width=".5" text-anchor="middle" textLength="28.600" lengthAdjust="spacingAndGlyphs" style="text-shadow:1.5px 1px 1.5px rgba(0,0,0,.22)">16:02</text>
<text x="915.4" y="989.3" font-size="12.600" fill="#000" stroke="#000" stroke-width=".5" text-anchor="middle" textLength="28.600" lengthAdjust="spacingAndGlyphs" style="text-shadow:1.5px 1px 1.5px rgba(0,0,0,.22)">16:01</text>
<text x="956.6" y="989.3" font-size="12.600" fill="#000" stroke="#000" stroke-width=".5" text-anchor="middle" textLength="28.600" lengthAdjust="spacingAndGlyphs" style="text-shadow:1.5px 1px 1.5px rgba(0,0,0,.22)">16:01</text>
<text x="997.8" y="989.3" font-size="12.600" fill="#000" stroke="#000" stroke-width=".5" text-anchor="middle" textLength="28.600" lengthAdjust="spacingAndGlyphs" style="text-shadow:1.5px 1px 1.5px rgba(0,0,0,.22)">16:00</text>
<text x="1039.0" y="989.3" font-size="12.600" fill="#000" stroke="#000" stroke-width=".5" text-anchor="middle" textLength="28.600" lengthAdjust="spacingAndGlyphs" style="text-shadow:1.5px 1px 1.5px rgba(0,0,0,.22)">16:00</text>
<text x="1080.2" y="989.3" font-size="12.600" fill="#000" stroke="#000" stroke-width=".5" text-anchor="middle" textLength="28.600" lengthAdjust="spacingAndGlyphs" style="text-shadow:1.5px 1px 1.5px rgba(0,0,0,.22)">15:59</text>
<text x="1121.3" y="989.3" font-size="12.600" fill="#000" stroke="#000" stroke-width=".5" text-anchor="middle" textLength="28.600" lengthAdjust="spacingAndGlyphs" style="text-shadow:1.5px 1px 1.5px rgba(0,0,0,.22)">15:59</text>
<text x="1162.5" y="989.3" font-size="12.600" fill="#000" stroke="#000" stroke-width=".5" text-anchor="middle" textLength="28.600" lengthAdjust="spacingAndGlyphs" style="text-shadow:1.5px 1px 1.5px rgba(0,0,0,.22)">15:58</text>
<text x="1203.7" y="989.3" font-size="12.600" fill="#000" stroke="#000" stroke-width=".5" text-anchor="middle" textLength="28.600" lengthAdjust="spacingAndGlyphs" style="text-shadow:1.5px 1px 1.5px rgba(0,0,0,.22)">15:58</text>
<text x="1244.9" y="989.3" font-size="12.600" fill="#000" stroke="#000" stroke-width=".5" text-anchor="middle" textLength="28.600" lengthAdjust="spacingAndGlyphs" style="text-shadow:1.5px 1px 1.5px rgba(0,0,0,.22)">15:57</text>
<text x="1286.1" y="989.3" font-size="12.600" fill="#000" stroke="#000" stroke-width=".5" text-anchor="middle" textLength="28.600" lengthAdjust="spacingAndGlyphs" style="text-shadow:1.5px 1px 1.5px rgba(0,0,0,.22)">15:57</text>
<text x="1327.3" y="989.3" font-size="12.600" fill="#000" stroke="#000" stroke-width=".5" text-anchor="middle" textLength="28.600" lengthAdjust="spacingAndGlyphs" style="text-shadow:1.5px 1px 1.5px rgba(0,0,0,.22)">15:56</text>
<text x="1368.5" y="989.3" font-size="12.600" fill="#000" stroke="#000" stroke-width=".5" text-anchor="middle" textLength="28.600" lengthAdjust="spacingAndGlyphs" style="text-shadow:1.5px 1px 1.5px rgba(0,0,0,.22)">15:56</text>
<text x="1409.6" y="989.3" font-size="12.600" fill="#000" stroke="#000" stroke-width=".5" text-anchor="middle" textLength="28.600" lengthAdjust="spacingAndGlyphs" style="text-shadow:1.5px 1px 1.5px rgba(0,0,0,.22)">15:55</text>
<text x="1450.8" y="989.3" font-size="12.600" fill="#000" stroke="#000" stroke-width=".5" text-anchor="middle" textLength="28.600" lengthAdjust="spacingAndGlyphs" style="text-shadow:1.5px 1px 1.5px rgba(0,0,0,.22)">15:55</text>
<text x="1492.0" y="989.3" font-size="12.600" fill="#000" stroke="#000" stroke-width=".5" text-anchor="middle" textLength="28.600" lengthAdjust="spacingAndGlyphs" style="text-shadow:1.5px 1px 1.5px rgba(0,0,0,.22)">15:54</text>
<text x="1533.2" y="989.3" font-size="12.600" fill="#000" stroke="#000" stroke-width=".5" text-anchor="middle" textLength="28.600" lengthAdjust="spacingAndGlyphs" style="text-shadow:1.5px 1px 1.5px rgba(0,0,0,.22)">15:54</text>
<text x="1574.4" y="989.3" font-size="12.600" fill="#000" stroke="#000" stroke-width=".5" text-anchor="middle" textLength="28.600" lengthAdjust="spacingAndGlyphs" style="text-shadow:1.5px 1px 1.5px rgba(0,0,0,.22)">15:53</text>
<text x="1615.6" y="989.3" font-size="12.600" fill="#000" stroke="#000" stroke-width=".5" text-anchor="middle" textLength="28.600" lengthAdjust="spacingAndGlyphs" style="text-shadow:1.5px 1px 1.5px rgba(0,0,0,.22)">15:53</text>
<text x="1656.7" y="989.3" font-size="12.600" fill="#000" stroke="#000" stroke-width=".5" text-anchor="middle" textLength="28.600" lengthAdjust="spacingAndGlyphs" style="text-shadow:1.5px 1px 1.5px rgba(0,0,0,.22)">15:52</text>
<text x="1697.9" y="989.3" font-size="12.600" fill="#000" stroke="#000" stroke-width=".5" text-anchor="middle" textLength="28.600" lengthAdjust="spacingAndGlyphs" style="text-shadow:1.5px 1px 1.5px rgba(0,0,0,.22)">15:52</text>
<text x="1739.1" y="989.3" font-size="12.600" fill="#000" stroke="#000" stroke-width=".5" text-anchor="middle" textLength="28.600" lengthAdjust="spacingAndGlyphs" style="text-shadow:1.5px 1px 1.5px rgba(0,0,0,.22)">15:51</text>
<text x="1780.3" y="989.3" font-size="12.600" fill="#000" stroke="#000" stroke-width=".5" text-anchor="middle" textLength="28.600" lengthAdjust="spacingAndGlyphs" style="text-shadow:1.5px 1px 1.5px rgba(0,0,0,.22)">15:51</text>
<text x="1821.5" y="989.3" font-size="12.600" fill="#000" stroke="#000" stroke-width=".5" text-anchor="middle" textLength="28.600" lengthAdjust="spacingAndGlyphs" style="text-shadow:1.5px 1px 1.5px rgba(0,0,0,.22)">15:50</text>
<text transform="translate(73.5 881) rotate(-90)" font-size="12" fill="#111" text-anchor="middle" textLength="24" lengthAdjust="spacingAndGlyphs">кВА</text>
</svg>
<div class="a" style="left:0px;top:1005px;width:1920px;height:25px;background:#f0f0f0;"></div>
<div class="a" style="left:0px;top:1005px;width:1920px;height:1px;background:#ffffff;"></div>
<div class="a" style="left:0px;top:1006px;width:1916px;height:1px;background:#a0a0a0;"></div>
<div class="a" style="left:0px;top:1006px;width:1px;height:24px;background:#a0a0a0;"></div>
<div class="a" style="left:1px;top:1007px;width:1915px;height:1px;background:#f7f7f7;"></div>
<div class="a" style="left:1916px;top:1006px;width:1px;height:24px;background:#ffffff;"></div>
<div class="a" style="left:0px;top:1029px;width:1920px;height:1px;background:#ffffff;"></div>
<div class="a" style="left:0px;top:1030px;width:1920px;height:9px;background:#0a0d13;"></div>
<div class="a" style="left:374px;top:1030px;width:61px;height:9px;background:#3b3e44;"></div>
<div class="a" style="left:1914px;top:1030px;width:1px;height:9px;background:#5a5d62;"></div>
<svg style="left:1795px;top:1034px" width="40" height="5"><rect x="2" y="3.500" width="1.500" height="2" fill="#ddd"/><rect x="6" y="3" width="7" height="2" fill="#ddd"/><rect x="17" y="3" width="3" height="2" fill="#ddd"/><rect x="22" y="3" width="6" height="2" fill="#ddd"/></svg>
</body></html>
